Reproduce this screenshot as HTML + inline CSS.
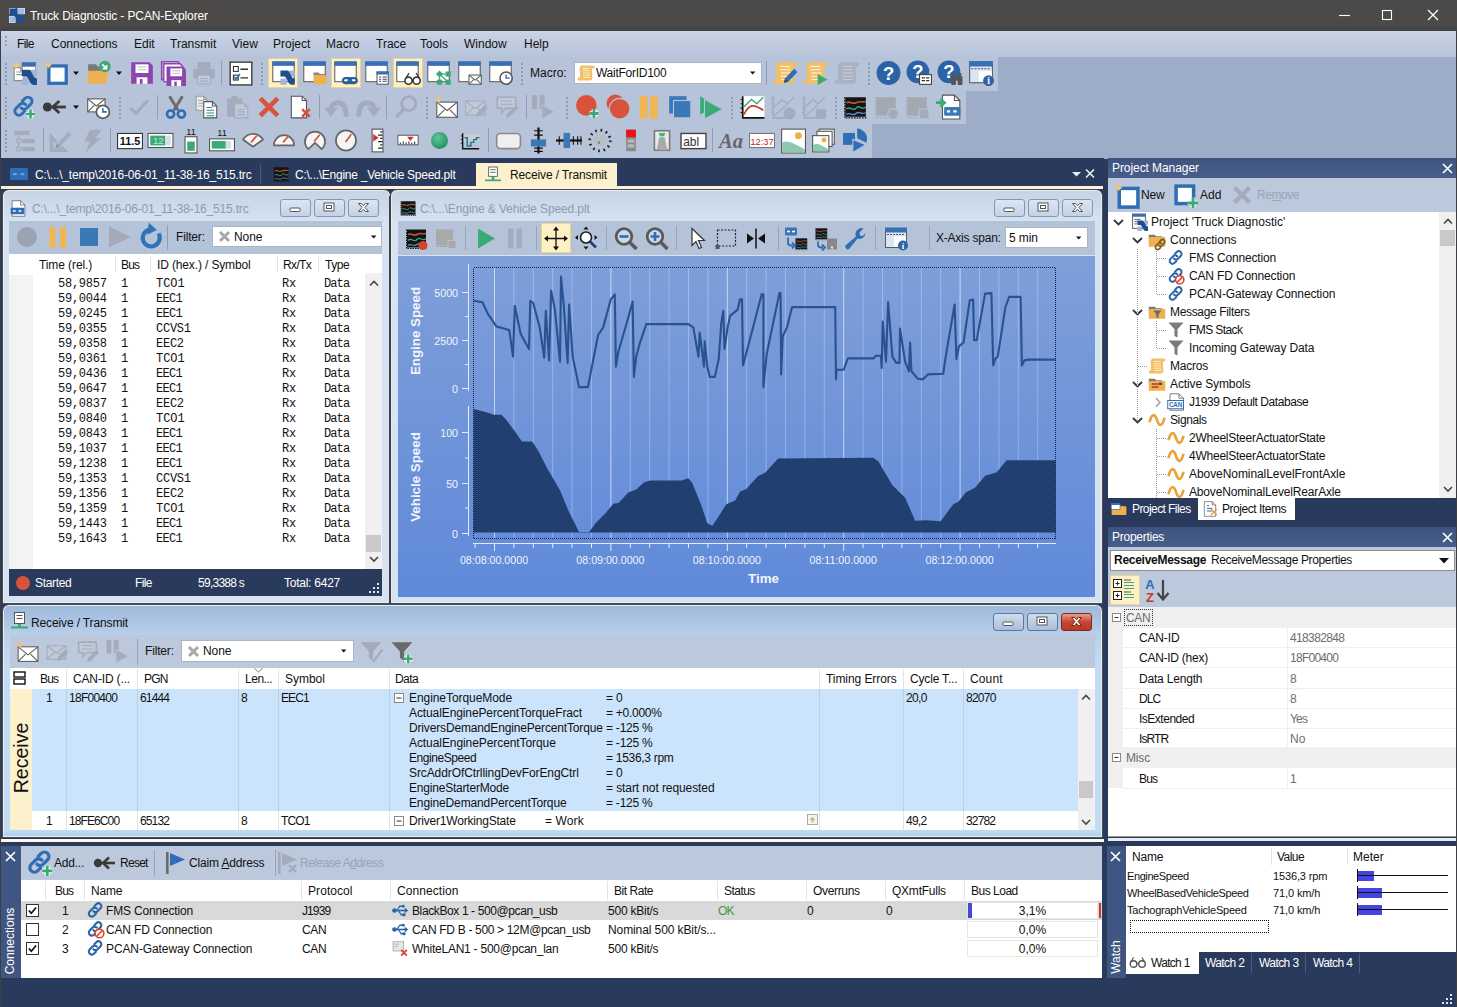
<!DOCTYPE html><html><head><meta charset="utf-8"><title>Truck Diagnostic - PCAN-Explorer</title><style>
*{box-sizing:border-box;margin:0;padding:0}
html,body{width:1457px;height:1007px;overflow:hidden;background:#2a3a5c}
body{font-family:"Liberation Sans",sans-serif;font-size:12px;color:#111;position:relative}
.a{position:absolute}
.t{position:absolute;white-space:pre;line-height:14px;height:14px}
.w{color:#fff}
.g{color:#8a93a3}
svg{position:absolute;overflow:visible}
.mono{font-family:"Liberation Mono",monospace;font-size:12px;letter-spacing:-0.25px}
</style></head><body>
<div class="a" style="left:0px;top:0px;width:1457px;height:31px;background:#4b4a48"></div>
<div class="t w" style="left:30px;top:9px;letter-spacing:-0.113px;">Truck Diagnostic - PCAN-Explorer</div>
<div class="a" style="left:0px;top:27px;width:1457px;height:4px;background:linear-gradient(#484746,#3f4246)"></div>
<svg style="left:9px;top:8px" width="16" height="15" viewBox="0 0 17 17" preserveAspectRatio="none"><rect x="0" y="0" width="7" height="7" fill="#7aa0d8"/><rect x="9" y="0" width="8" height="7" fill="#c9d9f0"/><rect x="0" y="9" width="7" height="8" fill="#c9d9f0"/><path d="M1 1h6c4 0 3 9 9 9v7h-5c-5 0-3-9-8-9H1z" fill="#1f4e8c"/><rect x="9" y="1" width="7" height="6" fill="#9dbce8"/><rect x="1" y="10" width="6" height="6" fill="#9dbce8"/></svg>
<svg style="left:1330px;top:0" width="127" height="31" stroke="#fff" fill="none" stroke-width="1.100"><path d="M9 15.500h11"/><rect x="52.500" y="10.500" width="9" height="9"/><path d="M98 10l10 10m0-10l-10 10" stroke-width="1.300"/></svg>
<div class="a" style="left:0px;top:31px;width:1457px;height:26px;background:linear-gradient(#cad4e5,#b7c4da)"></div>
<div class="t " style="left:17px;top:37px;letter-spacing:-0.636px;">File</div>
<div class="t " style="left:51px;top:37px;letter-spacing:-0.011px;">Connections</div>
<div class="t " style="left:134px;top:37px;">Edit</div>
<div class="t " style="left:170px;top:37px;">Transmit</div>
<div class="t " style="left:232px;top:37px;">View</div>
<div class="t " style="left:273px;top:37px;">Project</div>
<div class="t " style="left:326px;top:37px;">Macro</div>
<div class="t " style="left:376px;top:37px;">Trace</div>
<div class="t " style="left:420px;top:37px;">Tools</div>
<div class="t " style="left:464px;top:37px;">Window</div>
<div class="t " style="left:524px;top:37px;">Help</div>
<div class="a" style="left:0px;top:57px;width:1457px;height:102px;background:#9eadc7"></div>
<div class="a" style="left:1px;top:57px;width:997px;height:34px;background:#b6c3d9"></div>
<div class="a" style="left:1px;top:91px;width:965px;height:33px;background:#b6c3d9"></div>
<div class="a" style="left:1px;top:124px;width:871px;height:34px;background:#b6c3d9"></div>
<svg style="left:0;top:0" width="1457" height="160"><defs><radialGradient id="ballg" cx="0.4" cy="0.35" r="0.7"><stop offset="0" stop-color="#5fc79a"/><stop offset="1" stop-color="#1f8f5f"/></radialGradient></defs><rect x="5" y="63" width="2" height="2" fill="#8e9db6"/><rect x="5" y="67" width="2" height="2" fill="#8e9db6"/><rect x="5" y="71" width="2" height="2" fill="#8e9db6"/><rect x="5" y="75" width="2" height="2" fill="#8e9db6"/><rect x="5" y="79" width="2" height="2" fill="#8e9db6"/><rect x="5" y="83" width="2" height="2" fill="#8e9db6"/><g transform="translate(12.0 60.0) scale(1.0833333333333333)"><path d="M2 7h6l3 3v9h-9z" fill="#fff" stroke="#8a8a8a" stroke-width="1"/><path d="M8 7v3h3" fill="none" stroke="#8a8a8a" stroke-width="1"/><path d="M4 11h5M4 13.500h5" stroke="#999" stroke-width="1"/><rect x="9" y="2" width="13" height="4" fill="#3b6fb5"/><rect x="9.500" y="6" width="12" height="4" fill="#fff" stroke="#777" stroke-width="0.600"/><g transform="translate(9 9) scale(1.0)"><rect x="8" y="0" width="6" height="6" fill="#9db7dc"/><rect x="0" y="8" width="6" height="6" fill="#9db7dc"/><path d="M0 0h6.500c3 0 3.500 8 7.500 8v6h-3c-4 0-4.500-8-7.500-8H0z" fill="#1f4e8c"/></g><path d="M4 1.4l1.08 2.52 2.52 1.08-2.52 1.08-1.08 2.52-1.08-2.52-2.52-1.08 2.52-1.08z" fill="#f3c27a"/><circle cx="4" cy="5" r="2.232" fill="#f3c27a"/></g><g transform="translate(44.0 60.0) scale(1.0833333333333333)"><rect x="4.500" y="5.500" width="16" height="16" fill="#fff" stroke="#2f6db5" stroke-width="3"/><path d="M4 0.8999999999999999l1.08 2.52 2.52 1.08-2.52 1.08-1.08 2.52-1.08-2.52-2.52-1.08 2.52-1.08z" fill="#f3c27a"/><circle cx="4" cy="4.5" r="2.232" fill="#f3c27a"/></g><g transform="translate(86.0 60.0) scale(1.0833333333333333)"><path d="M2 4h7l2 2h5v6H2z" fill="#7a7a7a"/><path d="M2 10h19l-2.500 12H2z" fill="#f0b050"/><circle cx="17.500" cy="6" r="5.300" fill="#3aaa78"/><path d="M15 4l4 4m0-3.500v3.500h-3.500" stroke="#fff" stroke-width="1.500" fill="none"/></g><g transform="translate(129.0 60.0) scale(1.0833333333333333)"><g transform="translate(2 2) scale(1.0)"><path d="M0 0h17l3 3v17H0z" fill="#8e44ad"/><rect x="4" y="2" width="12" height="8" fill="#fff"/><path d="M6 4.500h8M6 7h8" stroke="#bbb" stroke-width="1"/><rect x="5" y="14" width="10" height="6" fill="#fff"/><rect x="8" y="15.500" width="2.500" height="4.500" fill="#8e44ad"/></g></g><g transform="translate(160.0 60.0) scale(1.0833333333333333)"><path d="M1.500 1.500h15l2.500 2.500v14h-17.500z" fill="none" stroke="#8e44ad" stroke-width="1.300"/><path d="M3.500 3.500h15l2.500 2.500v14h-17.500z" fill="#fff" stroke="#8e44ad" stroke-width="1.300"/><g transform="translate(6 6) scale(0.9)"><path d="M0 0h17l3 3v17H0z" fill="#8e44ad"/><rect x="4" y="2" width="12" height="8" fill="#fff"/><path d="M6 4.500h8M6 7h8" stroke="#bbb" stroke-width="1"/><rect x="5" y="14" width="10" height="6" fill="#fff"/><rect x="8" y="15.500" width="2.500" height="4.500" fill="#8e44ad"/></g></g><g transform="translate(191.0 60.0) scale(1.0833333333333333)"><rect x="6" y="2" width="12" height="6" fill="#a3acbd"/><rect x="2" y="8" width="20" height="9" rx="1.500" fill="#a3acbd"/><rect x="6" y="14" width="12" height="8" fill="#c3cad7" stroke="#a3acbd" stroke-width="1"/><path d="M8 17h8M8 19.500h8" stroke="#a3acbd" stroke-width="1"/></g><g transform="translate(228.0 60.0) scale(1.0833333333333333)"><rect x="2" y="2" width="20" height="21" fill="#fff" stroke="#333" stroke-width="1.200"/><rect x="5" y="6" width="4.500" height="4.500" fill="#fff" stroke="#333" stroke-width="1"/><rect x="5" y="14" width="4.500" height="4.500" fill="#fff" stroke="#333" stroke-width="1"/><path d="M11.500 8.500h7M11.500 16.500h7" stroke="#333" stroke-width="1.300"/><path d="M5.500 15.500l2 2 3.500-4.500" stroke="#2f6db5" stroke-width="1.600" fill="none"/></g><path d="M73 71.5h6l-3 3.500z" fill="#111"/><path d="M116 71.5h6l-3 3.500z" fill="#111"/><rect x="221" y="61" width="1" height="24" fill="#8f9db4"/><rect x="261" y="63" width="2" height="2" fill="#8e9db6"/><rect x="261" y="67" width="2" height="2" fill="#8e9db6"/><rect x="261" y="71" width="2" height="2" fill="#8e9db6"/><rect x="261" y="75" width="2" height="2" fill="#8e9db6"/><rect x="261" y="79" width="2" height="2" fill="#8e9db6"/><rect x="261" y="83" width="2" height="2" fill="#8e9db6"/><rect x="268.5" y="58.500" width="29" height="29" fill="#fdf0c4" stroke="#ecd28f" stroke-width="1"/><rect x="331.5" y="58.500" width="29" height="29" fill="#fdf0c4" stroke="#ecd28f" stroke-width="1"/><rect x="393.5" y="58.500" width="29" height="29" fill="#fdf0c4" stroke="#ecd28f" stroke-width="1"/><g transform="translate(271.25 60.25) scale(1.0208333333333333)"><rect x="1.500" y="2" width="21" height="19" fill="#fff" stroke="#5a5a5a" stroke-width="1"/><rect x="1" y="1" width="22" height="4.500" fill="#3b6fb5"/><g transform="translate(9 10) scale(1.0)"><rect x="8" y="0" width="6" height="6" fill="#9db7dc"/><rect x="0" y="8" width="6" height="6" fill="#9db7dc"/><path d="M0 0h6.500c3 0 3.500 8 7.500 8v6h-3c-4 0-4.500-8-7.500-8H0z" fill="#1f4e8c"/></g></g><g transform="translate(302.25 60.25) scale(1.0208333333333333)"><rect x="1.500" y="2" width="21" height="19" fill="#fff" stroke="#5a5a5a" stroke-width="1"/><rect x="1" y="1" width="22" height="4.500" fill="#3b6fb5"/><path d="M11 12h5l1.500 1.500h6v1.500H11z" fill="#8a8a8a"/><rect x="11" y="14.500" width="13" height="9" fill="#f0b050"/></g><g transform="translate(333.25 60.25) scale(1.0208333333333333)"><rect x="1.500" y="2" width="21" height="19" fill="#fff" stroke="#5a5a5a" stroke-width="1"/><rect x="1" y="1" width="22" height="4.500" fill="#3b6fb5"/><g transform="translate(8.5 16.5) scale(1.0)" fill="none" stroke="#2a5f9e" stroke-width="2.200"><rect x="1" y="1" width="8" height="5" rx="2.500"/><rect x="6.500" y="1" width="8" height="5" rx="2.500"/></g></g><g transform="translate(364.25 60.25) scale(1.0208333333333333)"><rect x="1.500" y="2" width="21" height="19" fill="#fff" stroke="#5a5a5a" stroke-width="1"/><rect x="1" y="1" width="22" height="4.500" fill="#3b6fb5"/><rect x="12.500" y="11.500" width="11" height="12" fill="#fff" stroke="#555" stroke-width="1"/><rect x="12" y="11" width="12" height="3" fill="#3b6fb5"/><path d="M14.500 16.500h2M18 16.500h4M14.500 18.500h2M18 18.500h4M14.500 20.500h2M18 20.500h4" stroke="#445" stroke-width="1"/></g><g transform="translate(395.25 60.25) scale(1.0208333333333333)"><rect x="1.500" y="2" width="21" height="19" fill="#fff" stroke="#5a5a5a" stroke-width="1"/><rect x="1" y="1" width="22" height="4.500" fill="#3b6fb5"/><circle cx="13" cy="20" r="3.500" fill="#fff" stroke="#3a3a3a" stroke-width="1.600"/><circle cx="21" cy="20" r="3.500" fill="#fff" stroke="#3a3a3a" stroke-width="1.600"/><path d="M10.500 17.500l3-5M23.500 17.500l-3-5M16.500 19.500h1" stroke="#3a3a3a" stroke-width="1.300" fill="none"/></g><g transform="translate(426.25 60.25) scale(1.0208333333333333)"><rect x="1.500" y="2" width="21" height="19" fill="#fff" stroke="#5a5a5a" stroke-width="1"/><rect x="1" y="1" width="22" height="4.500" fill="#3b6fb5"/><g fill="#3aaa78"><path d="M13 10l3.500 3.500-3.500 3.500-3.500-3.500z"/><rect x="19" y="11" width="5" height="5"/><rect x="10.500" y="19" width="5" height="5"/><rect x="19" y="19" width="5" height="5"/></g><path d="M13 13.500h8.500M13 13.500v8M13 13.500l8.500 8" stroke="#3aaa78" stroke-width="1.200"/></g><g transform="translate(457.25 60.25) scale(1.0208333333333333)"><rect x="1.500" y="2" width="21" height="19" fill="#fff" stroke="#5a5a5a" stroke-width="1"/><rect x="1" y="1" width="22" height="4.500" fill="#3b6fb5"/><rect x="11.5" y="14.5" width="12" height="9" fill="#fff" stroke="#5a5a5a" stroke-width="1"/><path d="M11.5 14.5l6.0 4.95 6.0-4.95M11.5 23.5l4.5600000000000005-4.5M23.5 23.5l-4.5600000000000005-4.5" fill="none" stroke="#5a5a5a" stroke-width="1"/></g><g transform="translate(488.25 60.25) scale(1.0208333333333333)"><rect x="1.500" y="2" width="21" height="19" fill="#fff" stroke="#5a5a5a" stroke-width="1"/><rect x="1" y="1" width="22" height="4.500" fill="#3b6fb5"/><circle cx="17.5" cy="17.5" r="6" fill="#fff" stroke="#5a5a5a" stroke-width="1.600"/><path d="M17.5 13.9V17.5h3.5999999999999996" fill="none" stroke="#2f6db5" stroke-width="1.400"/></g><rect x="521" y="63" width="2" height="2" fill="#8e9db6"/><rect x="521" y="67" width="2" height="2" fill="#8e9db6"/><rect x="521" y="71" width="2" height="2" fill="#8e9db6"/><rect x="521" y="75" width="2" height="2" fill="#8e9db6"/><rect x="521" y="79" width="2" height="2" fill="#8e9db6"/><rect x="521" y="83" width="2" height="2" fill="#8e9db6"/><rect x="868" y="63" width="2" height="2" fill="#8e9db6"/><rect x="868" y="67" width="2" height="2" fill="#8e9db6"/><rect x="868" y="71" width="2" height="2" fill="#8e9db6"/><rect x="868" y="75" width="2" height="2" fill="#8e9db6"/><rect x="868" y="79" width="2" height="2" fill="#8e9db6"/><rect x="868" y="83" width="2" height="2" fill="#8e9db6"/><rect x="766" y="61" width="1" height="24" fill="#8f9db4"/><g transform="translate(772.0 60.0) scale(1.0833333333333333)"><path d="M7 2h14.500c1.500 0 2 1.200 1.500 2.500-0.500 1.400-1.700 1.700-3.200 1.700l0.700 11.300c0 2.500-1.200 4.500-3.500 4.500H2.500c-1.500 0-2-1.200-1.500-2.500 0.500-1.400 1.700-1.700 3.200-1.700L3.500 6.500C3.300 4 4.800 2 7 2z" fill="#f2c067"/><path d="M7.500 6h9M7.500 9h9.500M8 12h9.500M8 15h9.500M8.500 18h9" stroke="#fff6e0" stroke-width="1.100"/><path d="M11 21l1-4 8.500-9 3 3-8.500 9z" fill="#2f6db5"/><path d="M11 21l1-4 3 3z" fill="#1f4e8c"/></g><g transform="translate(802.5 60.0) scale(1.0833333333333333)"><path d="M7 2h14.500c1.500 0 2 1.200 1.500 2.500-0.500 1.400-1.700 1.700-3.200 1.700l0.700 11.300c0 2.500-1.200 4.500-3.500 4.500H2.500c-1.500 0-2-1.200-1.500-2.500 0.500-1.400 1.700-1.700 3.200-1.700L3.500 6.500C3.300 4 4.800 2 7 2z" fill="#f2c067"/><path d="M7.500 6h9M7.500 9h9.500M8 12h9.500M8 15h9.500M8.500 18h9" stroke="#fff6e0" stroke-width="1.100"/><path d="M14 13v10l9-5z" fill="#3aaa78"/></g><g transform="translate(834.0 60.0) scale(1.0833333333333333)"><path d="M7 2h14.500c1.500 0 2 1.200 1.500 2.500-0.500 1.400-1.700 1.700-3.200 1.700l0.700 11.300c0 2.500-1.200 4.500-3.500 4.500H2.500c-1.500 0-2-1.200-1.500-2.500 0.500-1.400 1.700-1.700 3.200-1.700L3.500 6.500C3.300 4 4.800 2 7 2z" fill="#aab2c2"/><path d="M7.500 6h9M7.500 9h9.500M8 12h9.500M8 15h9.500M8.500 18h9" stroke="#c9d0dc" stroke-width="1.100"/></g><g transform="translate(875.5 60.0) scale(1.0833333333333333)"><circle cx="12" cy="12" r="11" fill="#2c63a7"/><text x="12" y="18" text-anchor="middle" font-size="17" font-weight="bold" fill="#fff" font-family="Liberation Sans, sans-serif">?</text></g><g transform="translate(906.0 60.0) scale(1.0833333333333333)"><circle cx="11" cy="11" r="10.5" fill="#2c63a7"/><text x="11" y="17" text-anchor="middle" font-size="17" font-weight="bold" fill="#fff" font-family="Liberation Sans, sans-serif">?</text><rect x="12.500" y="13.500" width="11" height="9" fill="#fff" stroke="#444" stroke-width="1"/><path d="M14.500 16.500h3M18.500 16.500h3M14.500 19h3M18.500 19h3" stroke="#333" stroke-width="1.300"/></g><g transform="translate(937.0 60.0) scale(1.0833333333333333)"><circle cx="11" cy="11" r="10.5" fill="#2c63a7"/><text x="11" y="17" text-anchor="middle" font-size="17" font-weight="bold" fill="#fff" font-family="Liberation Sans, sans-serif">?</text><g fill="#555"><rect x="13" y="15" width="4.500" height="8" rx="1"/><rect x="19" y="15" width="4.500" height="8" rx="1"/><rect x="14" y="12" width="2.500" height="4"/><rect x="20" y="12" width="2.500" height="4"/><rect x="17" y="16" width="2.500" height="3"/></g></g><g transform="translate(968.0 60.0) scale(1.0833333333333333)"><rect x="1.500" y="2" width="21" height="19" fill="#dbe6f5" stroke="#5a5a5a" stroke-width="1"/><rect x="1" y="1" width="22" height="5" fill="#3b6fb5"/><path d="M3 8h18" stroke="#555" stroke-width="1" stroke-dasharray="2 1"/><rect x="10" y="10" width="12" height="10" fill="#fff"/><circle cx="19" cy="19" r="5" fill="#2c63a7"/><text x="19" y="22.500" text-anchor="middle" font-size="9" font-weight="bold" fill="#fff" font-family="Liberation Serif, serif">i</text></g><rect x="5" y="97" width="2" height="2" fill="#8e9db6"/><rect x="5" y="101" width="2" height="2" fill="#8e9db6"/><rect x="5" y="105" width="2" height="2" fill="#8e9db6"/><rect x="5" y="109" width="2" height="2" fill="#8e9db6"/><rect x="5" y="113" width="2" height="2" fill="#8e9db6"/><rect x="5" y="117" width="2" height="2" fill="#8e9db6"/><rect x="119" y="97" width="2" height="2" fill="#8e9db6"/><rect x="119" y="101" width="2" height="2" fill="#8e9db6"/><rect x="119" y="105" width="2" height="2" fill="#8e9db6"/><rect x="119" y="109" width="2" height="2" fill="#8e9db6"/><rect x="119" y="113" width="2" height="2" fill="#8e9db6"/><rect x="119" y="117" width="2" height="2" fill="#8e9db6"/><rect x="426" y="97" width="2" height="2" fill="#8e9db6"/><rect x="426" y="101" width="2" height="2" fill="#8e9db6"/><rect x="426" y="105" width="2" height="2" fill="#8e9db6"/><rect x="426" y="109" width="2" height="2" fill="#8e9db6"/><rect x="426" y="113" width="2" height="2" fill="#8e9db6"/><rect x="426" y="117" width="2" height="2" fill="#8e9db6"/><rect x="566" y="97" width="2" height="2" fill="#8e9db6"/><rect x="566" y="101" width="2" height="2" fill="#8e9db6"/><rect x="566" y="105" width="2" height="2" fill="#8e9db6"/><rect x="566" y="109" width="2" height="2" fill="#8e9db6"/><rect x="566" y="113" width="2" height="2" fill="#8e9db6"/><rect x="566" y="117" width="2" height="2" fill="#8e9db6"/><rect x="731" y="97" width="2" height="2" fill="#8e9db6"/><rect x="731" y="101" width="2" height="2" fill="#8e9db6"/><rect x="731" y="105" width="2" height="2" fill="#8e9db6"/><rect x="731" y="109" width="2" height="2" fill="#8e9db6"/><rect x="731" y="113" width="2" height="2" fill="#8e9db6"/><rect x="731" y="117" width="2" height="2" fill="#8e9db6"/><rect x="835" y="97" width="2" height="2" fill="#8e9db6"/><rect x="835" y="101" width="2" height="2" fill="#8e9db6"/><rect x="835" y="105" width="2" height="2" fill="#8e9db6"/><rect x="835" y="109" width="2" height="2" fill="#8e9db6"/><rect x="835" y="113" width="2" height="2" fill="#8e9db6"/><rect x="835" y="117" width="2" height="2" fill="#8e9db6"/><g transform="translate(11.0 94.0) scale(1.0833333333333333)"><g fill="none" stroke="#2f6db5" stroke-width="2.700" stroke-linecap="round"><path d="M10.500 6.500l2.500-2.500a3.700 3.700 0 0 1 5.300 5.300l-3.600 3.600a3.700 3.700 0 0 1-5.300 0"/><path d="M12.500 16l-2.500 2.500a3.700 3.700 0 0 1-5.300-5.300l3.600-3.600a3.700 3.700 0 0 1 5.300 0"/></g><path d="M13.8 18.5h8.4M18 14.3v8.4" stroke="#fff" stroke-width="4.0"/><path d="M13.8 18.5h8.4M18 14.3v8.4" stroke="#3aaa78" stroke-width="2.4"/></g><g transform="translate(42.0 94.0) scale(1.0833333333333333)"><circle cx="5" cy="12" r="4.200" fill="#3a3a3a"/><path d="M10 12h12" stroke="#3a3a3a" stroke-width="2.600"/><path d="M16 6.500l-6 5.500 6 5.500" stroke="#3a3a3a" stroke-width="2.600" fill="none"/></g><g transform="translate(85.0 94.0) scale(1.0833333333333333)"><rect x="2.5" y="4.5" width="16" height="12" fill="#fff" stroke="#5a5a5a" stroke-width="1"/><path d="M2.5 4.5l8.0 6.6000000000000005 8.0-6.6000000000000005M2.5 16.5l6.08-6.0M18.5 16.5l-6.08-6.0" fill="none" stroke="#5a5a5a" stroke-width="1"/><circle cx="16.5" cy="16.5" r="6" fill="#fff" stroke="#5a5a5a" stroke-width="1.600"/><path d="M16.5 12.9V16.5h3.5999999999999996" fill="none" stroke="#2f6db5" stroke-width="1.400"/></g><g transform="translate(126.0 94.0) scale(1.0833333333333333)"><path d="M4 13l5 5 11-12" stroke="#a3acbd" stroke-width="3" fill="none"/></g><g transform="translate(163.0 94.0) scale(1.0833333333333333)"><path d="M6 2l8 13M18 2l-8 13" stroke="#6a6a6a" stroke-width="2.600"/><circle cx="7" cy="18.500" r="3.300" fill="none" stroke="#2f6db5" stroke-width="2.400"/><circle cx="17" cy="18.500" r="3.300" fill="none" stroke="#2f6db5" stroke-width="2.400"/></g><g transform="translate(194.0 94.0) scale(1.0833333333333333)"><path d="M2 2h7l3 3v10h-10z" fill="#e9edf3" stroke="#9a9a9a" stroke-width="1"/><path d="M9 2v3h3" fill="none" stroke="#9a9a9a" stroke-width="1"/><path d="M4 6h5M4 8.500h6M4 11h6" stroke="#aaa" stroke-width="1"/><path d="M9 7h8l4 4v11h-12z" fill="#fff" stroke="#555" stroke-width="1"/><path d="M17 7v4h4" fill="none" stroke="#555" stroke-width="1"/><path d="M11.500 12.500h5M11.500 15h7M11.500 17.500h7M11.500 20h7" stroke="#2a8a8a" stroke-width="1"/></g><g transform="translate(225.0 94.0) scale(1.0833333333333333)"><rect x="2" y="4" width="14" height="17" fill="#a3acbd"/><rect x="6" y="2" width="6" height="4" fill="#a3acbd"/><path d="M9 9h9l3 3v10h-12z" fill="#c3cad7" stroke="#a3acbd" stroke-width="1"/><path d="M18 9v3h3" fill="none" stroke="#a3acbd" stroke-width="1"/><path d="M11.500 14h6M11.500 16.500h7M11.500 19h7" stroke="#a3acbd" stroke-width="1"/></g><g transform="translate(256.0 94.0) scale(1.0833333333333333)"><path d="M4 4l16 16M20 4l-16 16" stroke="#d9533c" stroke-width="4.200"/></g><g transform="translate(287.0 94.0) scale(1.0833333333333333)"><path d="M4 2h10l4 4v16h-14z" fill="#fff" stroke="#555" stroke-width="1"/><path d="M14 2v4h4" fill="none" stroke="#555" stroke-width="1"/><path d="M14 14l7 7m0-7l-7 7" stroke="#d9533c" stroke-width="2.400"/></g><g transform="translate(324.0 94.0) scale(1.0833333333333333)"><path d="M20.500 21c0-9-2.500-13-7.500-13s-6.500 3-6.500 7" stroke="#a3acbd" stroke-width="4.600" fill="none"/><path d="M0 12.500h13l-6.500 8.500z" fill="#a3acbd"/></g><g transform="translate(355.0 94.0) scale(1.0833333333333333)"><g transform="translate(24 0) scale(-1 1)"><path d="M20.500 21c0-9-2.500-13-7.500-13s-6.500 3-6.500 7" stroke="#a3acbd" stroke-width="4.600" fill="none"/><path d="M0 12.500h13l-6.500 8.500z" fill="#a3acbd"/></g></g><g transform="translate(393.0 94.0) scale(1.0833333333333333)"><circle cx="14.500" cy="9" r="6.500" fill="none" stroke="#a3acbd" stroke-width="2.600"/><path d="M10 14l-7 7.500" stroke="#a3acbd" stroke-width="3.200"/></g><g transform="translate(433.0 94.0) scale(1.0833333333333333)"><rect x="3.5" y="7.5" width="19" height="14" fill="#fff" stroke="#5a5a5a" stroke-width="1"/><path d="M3.5 7.5l9.5 7.700000000000001 9.5-7.700000000000001M3.5 21.5l7.22-7.0M22.5 21.5l-7.22-7.0" fill="none" stroke="#5a5a5a" stroke-width="1"/><path d="M5 2.1l1.02 2.38 2.38 1.02-2.38 1.02-1.02 2.38-1.02-2.38-2.38-1.02 2.38-1.02z" fill="#f3c27a"/><circle cx="5" cy="5.5" r="2.108" fill="#f3c27a"/></g><g transform="translate(463.0 94.0) scale(1.0833333333333333)"><rect x="2.5" y="6.5" width="18" height="13" fill="#c3cad7" stroke="#a3acbd" stroke-width="1"/><path d="M2.5 6.5l9.0 7.15 9.0-7.15M2.5 19.5l6.84-6.5M20.5 19.5l-6.84-6.5" fill="none" stroke="#a3acbd" stroke-width="1"/><path d="M12 21l1-4 7-7 3 3-7 7z" fill="#a3acbd"/></g><g transform="translate(494.0 94.0) scale(1.0833333333333333)"><path d="M3 3h17v10h-9l-4 4v-4H3z" fill="#c3cad7" stroke="#a3acbd" stroke-width="1.500"/><path d="M6 6.500h11M6 9.500h11" stroke="#a3acbd" stroke-width="1"/><path d="M11 22l1-3.500 8-8 2.500 2.500-8 8z" fill="#a3acbd"/></g><g transform="translate(530.0 94.0) scale(1.0833333333333333)"><rect x="2" y="1" width="4.500" height="13" fill="#a3acbd"/><rect x="9" y="1" width="4.500" height="13" fill="#a3acbd"/><path d="M11 10v13l12-6.500z" fill="#a3acbd" stroke="#b6c3d9" stroke-width="1"/></g><g transform="translate(575.0 94.0) scale(1.0833333333333333)"><circle cx="10.500" cy="10.500" r="9.500" fill="#d9533c"/><path d="M13.3 18h8.4M17.5 13.8v8.4" stroke="#fff" stroke-width="4.2"/><path d="M13.3 18h8.4M17.5 13.8v8.4" stroke="#3aaa78" stroke-width="2.6"/></g><g transform="translate(605.0 94.0) scale(1.0833333333333333)"><circle cx="9.500" cy="8.500" r="8" fill="#d9533c"/><circle cx="13.500" cy="13.500" r="9.500" fill="#d9533c" stroke="#b6c3d9" stroke-width="1"/></g><g transform="translate(636.0 94.0) scale(1.0833333333333333)"><rect x="3.500" y="2" width="7" height="21" rx="1" fill="#f0b652"/><rect x="13" y="2" width="7" height="21" rx="1" fill="#f0b652"/></g><g transform="translate(667.0 94.0) scale(1.0833333333333333)"><rect x="2" y="2" width="16" height="16" fill="#3b78b8"/><rect x="6" y="6" width="16" height="16" fill="#3b78b8" stroke="#b6c3d9" stroke-width="1"/></g><g transform="translate(698.0 94.0) scale(1.0833333333333333)"><path d="M2 2v17l15-8.500z" fill="#3aaa78"/><path d="M6 5v18l17-9z" fill="#3aaa78" stroke="#b6c3d9" stroke-width="1"/></g><g transform="translate(739.5 94.0) scale(1.0833333333333333)"><rect x="3" y="2" width="20" height="20" fill="#fff"/><path d="M3 2v20h20" stroke="#111" stroke-width="1.500" fill="none"/><path d="M1 5h2M1 9h2M1 13h2M1 17h2" stroke="#111" stroke-width="1"/><path d="M4 12l7-7 5 4 6-6" stroke="#3aaa78" stroke-width="1.300" fill="none"/><path d="M4 19c5-10 9-10 18-4" stroke="#c0392b" stroke-width="1.500" fill="none"/></g><g transform="translate(770.0 94.0) scale(1.0833333333333333)"><path d="M3 2v20h18" stroke="#a3acbd" stroke-width="1.500" fill="none"/><path d="M1 5h2M1 9h2M1 13h2M1 17h2" stroke="#a3acbd" stroke-width="1"/><path d="M4 12l7-7 5 4 6-6M4 20l12-10" stroke="#a3acbd" stroke-width="1.200" fill="none"/><circle cx="18" cy="18" r="5.500" fill="#a3acbd"/></g><g transform="translate(801.0 94.0) scale(1.0833333333333333)"><path d="M3 2v20h18" stroke="#a3acbd" stroke-width="1.500" fill="none"/><path d="M1 5h2M1 9h2M1 13h2M1 17h2" stroke="#a3acbd" stroke-width="1"/><path d="M4 12l7-7 5 4 6-6M4 20l12-10" stroke="#a3acbd" stroke-width="1.200" fill="none"/><rect x="14" y="14" width="9" height="9" fill="#a3acbd"/></g><g transform="translate(842.0 94.0) scale(1.0833333333333333)"><rect x="3" y="3" width="19" height="18" fill="#141414"/><path d="M2.500 3v19h20" stroke="#111" stroke-width="1" stroke-dasharray="1.500 1" fill="none"/><path d="M4 8c4-2 5 2 9 0s5 0 9-1" stroke="#c0563b" stroke-width="1.500" fill="none"/><path d="M4 14c3-4 6 3 9-1s5 3 9-1" stroke="#3aaa78" stroke-width="1.300" fill="none"/><path d="M4 19c3-3 6 2 9-1s5 2 9-1" stroke="#5a8fd0" stroke-width="1.200" fill="none"/></g><g transform="translate(873.0 94.0) scale(1.0833333333333333)"><rect x="3" y="3" width="18" height="17" fill="#a4a8b0"/><path d="M2.500 3v19h18" stroke="#a3acbd" stroke-width="1" stroke-dasharray="1.500 1" fill="none"/><circle cx="18.500" cy="18.500" r="5" fill="#a3acbd" stroke="#b6c3d9" stroke-width="1"/></g><g transform="translate(904.0 94.0) scale(1.0833333333333333)"><rect x="3" y="3" width="18" height="17" fill="#a4a8b0"/><path d="M2.500 3v19h18" stroke="#a3acbd" stroke-width="1" stroke-dasharray="1.500 1" fill="none"/><rect x="14" y="14" width="9" height="9" fill="#a3acbd" stroke="#b6c3d9" stroke-width="1"/></g><g transform="translate(936.0 94.0) scale(1.0833333333333333)"><path d="M6 1h11l5 5v17h-16z" fill="#fff" stroke="#555" stroke-width="1"/><path d="M17 1v5h5" fill="none" stroke="#555" stroke-width="1"/><rect x="7.500" y="12" width="15" height="8" rx="1" fill="#3b78b8"/><path d="M10 16h3M16 16h3" stroke="#fff" stroke-width="2"/><path d="M0 8h6M4 4.500l4 3.500-4 3.500" stroke="#3aaa78" stroke-width="2.400" fill="none"/></g><path d="M73 105.5h6l-3 3.500z" fill="#111"/><rect x="157" y="95" width="1" height="24" fill="#8f9db4"/><rect x="319" y="95" width="1" height="24" fill="#8f9db4"/><rect x="386" y="95" width="1" height="24" fill="#8f9db4"/><rect x="526" y="95" width="1" height="24" fill="#8f9db4"/><rect x="5" y="130" width="2" height="2" fill="#8e9db6"/><rect x="5" y="134" width="2" height="2" fill="#8e9db6"/><rect x="5" y="138" width="2" height="2" fill="#8e9db6"/><rect x="5" y="142" width="2" height="2" fill="#8e9db6"/><rect x="5" y="146" width="2" height="2" fill="#8e9db6"/><rect x="5" y="150" width="2" height="2" fill="#8e9db6"/><rect x="43" y="128" width="1" height="24" fill="#8f9db4"/><rect x="110" y="128" width="1" height="24" fill="#8f9db4"/><rect x="488" y="128" width="1" height="24" fill="#8f9db4"/><rect x="712" y="128" width="1" height="24" fill="#8f9db4"/><g transform="translate(11.0 127.5) scale(1.0833333333333333)"><rect x="3" y="3" width="14" height="4" fill="#a3acbd"/><rect x="11" y="10.500" width="11" height="4" fill="#a3acbd"/><rect x="11" y="18" width="11" height="4" fill="#a3acbd"/><rect x="5.500" y="10.500" width="3.500" height="3.500" fill="none" stroke="#a3acbd"/><rect x="5.500" y="18" width="3.500" height="3.500" fill="none" stroke="#a3acbd"/><path d="M7 7v3M7 14.500v3M9 12.500h2M9 20h2" stroke="#a3acbd"/></g><g transform="translate(48.0 127.5) scale(1.0833333333333333)"><path d="M1.500 22.500V5l17.500 17.500zM5 19h6.500L5 12.500z" fill="#a3acbd" fill-rule="evenodd"/><path d="M6.500 19.500l1.500-5L19 3l3.500 3.500L11.500 18z" fill="#a3acbd" stroke="#b6c3d9" stroke-width="1.200"/><path d="M6.500 19.500l1.500-5 3.500 3.500z" fill="#8f98aa"/></g><g transform="translate(79.0 127.5) scale(1.0833333333333333)"><path d="M10 2h11l-6 8h5L6 23l4-10H5z" fill="#a3acbd"/></g><g transform="translate(117.0 127.5) scale(1.0833333333333333)"><rect x="0.500" y="5.500" width="23" height="14" fill="#fff" stroke="#333" stroke-width="1"/><text x="12" y="16.5" text-anchor="middle" font-size="10" font-weight="bold" fill="#111" font-family="Liberation Sans, sans-serif" >11.5</text></g><g transform="translate(147.5 127.5) scale(1.0833333333333333)"><rect x="0.500" y="5.500" width="23" height="13" fill="#fff" stroke="#555" stroke-width="1"/><rect x="2.500" y="7.500" width="14" height="9" fill="#3aaa78"/><rect x="16.500" y="7.500" width="5" height="9" fill="#d6dde6"/><text x="10" y="15.5" text-anchor="middle" font-size="9" font-weight="normal" fill="#bfe5d2" font-family="Liberation Sans, sans-serif" >12</text></g><g transform="translate(178.0 127.5) scale(1.0833333333333333)"><text x="12" y="6.5" text-anchor="middle" font-size="8.5" font-weight="normal" fill="#111" font-family="Liberation Sans, sans-serif" >11</text><rect x="6.500" y="8.500" width="11" height="15" fill="#fff" stroke="#555" stroke-width="1"/><rect x="8.500" y="13" width="7" height="8.500" fill="#3aaa78"/></g><g transform="translate(209.0 127.5) scale(1.0833333333333333)"><text x="12" y="7.5" text-anchor="middle" font-size="8.5" font-weight="normal" fill="#111" font-family="Liberation Sans, sans-serif" >11</text><rect x="0.500" y="10.500" width="23" height="11" fill="#fff" stroke="#555" stroke-width="1"/><rect x="2.500" y="12.500" width="13" height="7" fill="#3aaa78"/><rect x="15.500" y="12.500" width="5" height="7" fill="#d6dde6"/></g><g transform="translate(241.5 129.0) scale(0.9583333333333334)"><path d="M1.500 11C7 3 17 3 22.500 11L12 18.500z" fill="#f5f5f5" stroke="#666" stroke-width="1.800" stroke-linejoin="round"/><path d="M10 14l6-7" stroke="#d9533c" stroke-width="1.800"/></g><g transform="translate(272.5 129.0) scale(0.9583333333333334)"><path d="M1.500 17a10.500 10.500 0 0 1 21 0z" fill="#f5f5f5" stroke="#666" stroke-width="1.800" stroke-linejoin="round"/><path d="M11 14l6-7" stroke="#d9533c" stroke-width="1.800"/></g><g transform="translate(303.5 129.0) scale(0.9583333333333334)"><path d="M5 21a10.500 10.500 0 1 1 14 0l-7-6.500z" fill="#f5f5f5" stroke="#666" stroke-width="1.800" stroke-linejoin="round"/><path d="M11 13l6-7" stroke="#d9533c" stroke-width="1.800"/></g><g transform="translate(334.5 129.0) scale(0.9583333333333334)"><circle cx="12" cy="12" r="10.500" fill="#f5f5f5" stroke="#666" stroke-width="1.800"/><path d="M11.500 13.500l6-8" stroke="#d9533c" stroke-width="1.800"/></g><g transform="translate(364.0 127.5) scale(1.0833333333333333)"><rect x="7.500" y="1.500" width="10" height="21" fill="#fff" stroke="#555" stroke-width="1"/><path d="M15 4h2M13 7h4M15 10h2M13 13h4M15 16h2M13 19h4" stroke="#222" stroke-width="1"/><path d="M8.500 6v7l5-3.500z" fill="#d0312d"/></g><g transform="translate(396.5 129.0) scale(0.9583333333333334)"><rect x="1.500" y="6.500" width="21" height="10" fill="#fff" stroke="#555" stroke-width="1"/><path d="M4 14v2M7 13v3M10 14v2M13 13v3M16 14v2M19 13v3" stroke="#222" stroke-width="1"/><path d="M11 8h7l-3.500 4.500z" fill="#d0312d"/></g><g transform="translate(427.5 128.5) scale(1.0)"><circle cx="12" cy="12" r="8.500" fill="url(#ballg)"/></g><g transform="translate(459.0 129.5) scale(0.9166666666666666)"><rect x="4" y="5" width="18" height="8" fill="#c9ccd3"/><path d="M4 4v17h18" stroke="#111" stroke-width="1.500" fill="none"/><path d="M2 7h2M2 11h2M2 15h2" stroke="#111"/><path d="M6 9h3v9h4v-4h3v-3h3v-2h3" stroke="#1f7a7a" stroke-width="1.500" fill="none"/></g><g transform="translate(495.0 127.5) scale(1.0833333333333333)"><rect x="1.500" y="5.500" width="22" height="14" rx="3.500" fill="#efefef" stroke="#8a8a8a" stroke-width="1.500"/></g><g transform="translate(525.5 127.5) scale(1.0833333333333333)"><path d="M12 0v24" stroke="#111" stroke-width="2"/><path d="M8 3h8M8 7h8M8 19h8M8 22h8" stroke="#111" stroke-width="1"/><rect x="5" y="11" width="14" height="6.500" fill="#3b78b8"/></g><g transform="translate(556.0 127.5) scale(1.0833333333333333)"><path d="M0 12h24" stroke="#111" stroke-width="2"/><path d="M3 8v8M16 8v8M20 8v8M23 8v8" stroke="#111" stroke-width="1"/><rect x="7" y="5" width="6" height="14" fill="#3b78b8"/></g><g transform="translate(587.0 127.5) scale(1.0833333333333333)"><circle cx="12" cy="12" r="9.500" fill="none" stroke="#222" stroke-width="2.500" stroke-dasharray="1.500 3.500"/><circle cx="12" cy="12" r="6" fill="#b9bec8"/><circle cx="11" cy="14" r="1.200" fill="#3aaa78"/></g><g transform="translate(618.0 127.5) scale(1.0833333333333333)"><rect x="7.500" y="2" width="9" height="20" rx="1" fill="#8a8a8a"/><rect x="7.500" y="2" width="9" height="7" fill="#e8101a"/><rect x="9" y="11" width="6" height="3" fill="#b9b9b9"/><rect x="9" y="15.500" width="6" height="3" fill="#b9b9b9"/></g><g transform="translate(649.0 127.5) scale(1.0833333333333333)"><rect x="5" y="3" width="14" height="18" fill="#e9e9e9" stroke="#7a7a7a" stroke-width="1.500"/><path d="M7 21l2.500-12h5l2.500 12z" fill="#a9a9a9"/><path d="M9 5h6l-1 3h-4z" fill="#3bbf6b"/></g><g transform="translate(680.5 127.5) scale(1.0833333333333333)"><rect x="0.500" y="5.500" width="23" height="14" fill="#fff" stroke="#444" stroke-width="1.300"/><text x="2.5" y="17" text-anchor="start" font-size="11" font-weight="normal" fill="#333" font-family="Liberation Sans, sans-serif" >abl</text></g><g transform="translate(718.0 127.5) scale(1.0833333333333333)"><text x="12" y="19" text-anchor="middle" font-size="19" font-weight="bold" fill="#666" font-family="Liberation Serif, serif" font-style="italic">Aa</text></g><g transform="translate(749.0 127.5) scale(1.0833333333333333)"><rect x="0.500" y="5.500" width="23" height="13" fill="#fff" stroke="#777" stroke-width="1"/><text x="12" y="16" text-anchor="middle" font-size="8.5" font-weight="normal" fill="#c0201c" font-family="Liberation Sans, sans-serif" >12:37</text></g><g transform="translate(780.0 127.5) scale(1.0833333333333333)"><rect x="1.500" y="1.500" width="22" height="22" fill="#fff" stroke="#555" stroke-width="1"/><circle cx="17" cy="7.500" r="3.200" fill="#f0b050"/><path d="M2 14c5-3 9 0 21 6v3H2z" fill="#8cc9b0"/></g><g transform="translate(811.0 127.5) scale(1.0833333333333333)"><rect x="7.500" y="1.500" width="14" height="14" fill="#fff" stroke="#555"/><rect x="5.500" y="3.500" width="14" height="14" fill="#fff" stroke="#555"/><rect x="1.500" y="7.500" width="15" height="15" fill="#fff" stroke="#555"/><circle cx="12" cy="11.500" r="2.300" fill="#f0b050"/><path d="M2 16c4-2 7 0 14 4v2H2z" fill="#8cc9b0"/></g><g transform="translate(842.0 127.5) scale(1.0833333333333333)"><rect x="1" y="5" width="11" height="11" fill="#2f6db5"/><path d="M14 10V1a9.500 9.500 0 0 1 8.500 13z" fill="#2f6db5"/><path d="M10 11v12l12-7z" fill="#2f6db5" stroke="#b6c3d9" stroke-width="1"/></g></svg>
<div class="t " style="left:530px;top:66px;">Macro:</div>
<div class="a" style="left:574px;top:62px;width:188px;height:22px;background:#fff;border:1px solid #aab4c4"></div>
<svg style="left:577px;top:64px" width="18" height="18" viewBox="0 0 24 24"><path d="M7 2h14.500c1.500 0 2 1.200 1.500 2.500-0.500 1.400-1.700 1.700-3.200 1.700l0.700 11.300c0 2.500-1.200 4.500-3.500 4.500H2.500c-1.500 0-2-1.200-1.500-2.500 0.500-1.400 1.700-1.700 3.200-1.700L3.500 6.500C3.300 4 4.800 2 7 2z" fill="#f2c067"/><path d="M7.500 6h9M7.500 9h9.500M8 12h9.500M8 15h9.500M8.500 18h9" stroke="#fff6e0" stroke-width="1.100"/></svg>
<div class="t " style="left:596px;top:66px;letter-spacing:-0.265px;">WaitForID100</div>
<svg style="left:749px;top:71px" width="8" height="5"><path d="M1 0.500h5.400l-2.700 3z" fill="#111"/></svg>
<div class="a" style="left:0px;top:159px;width:1457px;height:848px;background:#2a3a5c"></div>
<div class="a" style="left:0px;top:158px;width:1104px;height:28px;background:#2a3a5c"></div>
<div class="t w" style="left:35px;top:168px;letter-spacing:-0.186px;">C:\...\_temp\2016-06-01_11-38-16_515.trc</div>
<div class="a" style="left:260px;top:164px;width:1px;height:20px;background:#4b5b7c"></div>
<svg style="left:10px;top:165px" width="18" height="18" viewBox="0 0 24 24"><rect x="0" y="4" width="24" height="16" rx="2" fill="#2f6db5"/><path d="M4 12h5M14 12h5" stroke="#6d9bd6" stroke-width="3"/></svg>
<svg style="left:272px;top:165px" width="18" height="18" viewBox="0 0 24 24"><rect x="3" y="3" width="19" height="18" fill="#141414"/><path d="M2.500 3v19h20" stroke="#111" stroke-width="1" stroke-dasharray="1.500 1" fill="none"/><path d="M4 8c4-2 5 2 9 0s5 0 9-1" stroke="#c0563b" stroke-width="1.500" fill="none"/><path d="M4 14c3-4 6 3 9-1s5 3 9-1" stroke="#3aaa78" stroke-width="1.300" fill="none"/><path d="M4 19c3-3 6 2 9-1s5 2 9-1" stroke="#5a8fd0" stroke-width="1.200" fill="none"/></svg>
<div class="t w" style="left:295px;top:168px;letter-spacing:-0.259px;">C:\...\Engine _Vehicle Speed.plt</div>
<div class="a" style="left:476px;top:163px;width:141px;height:25px;background:#fdf0cd"></div>
<div class="t " style="left:510px;top:168px;letter-spacing:-0.132px;">Receive / Transmit</div>
<svg style="left:485px;top:166px" width="16" height="16" viewBox="0 0 24 24"><rect x="5.500" y="1.500" width="13" height="14" fill="#fff" stroke="#555" stroke-width="1.300"/><path d="M8 5.500h8M8 9.500h8" stroke="#555" stroke-width="1.300"/><path d="M0 21.500h24" stroke="#3aaa78" stroke-width="2.600"/><rect x="10" y="16" width="4" height="5" fill="#3aaa78"/></svg>
<div class="a" style="left:0px;top:186px;width:1103px;height:3px;background:#fdf1dc"></div>
<svg style="left:1070px;top:168px" width="30" height="12"><path d="M2 4h9l-4.500 4.500z" fill="#e8ecf3"/><path d="M16 1.500l8 8m0-8l-8 8" stroke="#e8ecf3" stroke-width="1.700" fill="none"/></svg>
<div class="a" style="left:2px;top:189px;width:389px;height:415px;background:linear-gradient(#c5d3e5 0,#d6e3f3 34px,#d6e3f3 100%);border:1px solid #4d4d4d;border-radius:7px 7px 0 0;box-shadow:inset 0 0 0 1px #e4edf8"></div>
<div class="t " style="left:32px;top:202px;color:#8e9aab;letter-spacing:-0.186px;">C:\...\_temp\2016-06-01_11-38-16_515.trc</div>
<div class="a" style="left:280px;top:199px;width:31px;height:18px;background:linear-gradient(#dbe6f3,#c3d2e6);border:1px solid #8797ae;border-radius:3px"></div>
<svg style="left:289px;top:207px" width="13" height="6"><rect x="1" y="1" width="10" height="3.500" rx="1" fill="#fff" stroke="#555" stroke-width="1"/></svg>
<div class="a" style="left:314px;top:199px;width:31px;height:18px;background:linear-gradient(#dbe6f3,#c3d2e6);border:1px solid #8797ae;border-radius:3px"></div>
<svg style="left:323px;top:202px" width="13" height="11"><rect x="1" y="1" width="10" height="8" fill="#fff" stroke="#555" stroke-width="1"/><rect x="3.500" y="3.500" width="5" height="3" fill="#fff" stroke="#555" stroke-width="1"/></svg>
<div class="a" style="left:348px;top:199px;width:31px;height:18px;background:linear-gradient(#dbe6f3,#c3d2e6);border:1px solid #8797ae;border-radius:3px"></div>
<svg style="left:357px;top:202px" width="13" height="11"><path d="M1.500 1.500h3l2 2.300 2-2.300h3l-3.500 4 3.500 4h-3l-2-2.300-2 2.300h-3l3.500-4z" fill="#fff" stroke="#555" stroke-width="1"/></svg>
<svg style="left:10px;top:200px" width="17" height="17" viewBox="0 0 24 24"><path d="M3 1h12l6 6v16h-18z" fill="#fff" stroke="#555" stroke-width="1"/><path d="M15 1v6h6" fill="none" stroke="#555" stroke-width="1"/><rect x="1" y="11" width="19" height="9" rx="1" fill="#2f6db5"/><path d="M4 15.500h4M12 15.500h4" stroke="#fff" stroke-width="2.200"/></svg>
<div class="a" style="left:9px;top:221px;width:373px;height:33px;background:#b5c3d9"></div>
<svg style="left:9px;top:221px" width="375" height="33"><circle cx="18" cy="16" r="10" fill="#9aa3b1"/><rect x="40.500" y="6" width="6" height="21" fill="#f0b652"/><rect x="51" y="6" width="6" height="21" fill="#f0b652"/><rect x="71" y="7" width="18" height="18" fill="#3b78b8"/><path d="M100 5.500v21l22-10.500z" fill="#a3abbb"/><path d="M141 8.500a8.500 8.500 0 1 0 8.500 4" fill="none" stroke="#2f74b7" stroke-width="4.200"/><path d="M139 2v12l9-6z" fill="#2f74b7" transform="rotate(8 141 8)"/><rect x="158" y="4" width="1" height="25" fill="#8f9db4"/></svg>
<div class="t " style="left:176px;top:230px;letter-spacing:-0.171px;">Filter:</div>
<div class="a" style="left:212px;top:226px;width:170px;height:21px;background:#fff;border:1px solid #aab4c4"></div>
<svg style="left:218px;top:230px" width="14" height="13"><path d="M2 2l9 9m0-9l-9 9" stroke="#a9a9a9" stroke-width="3"/></svg>
<div class="t " style="left:234px;top:230px;letter-spacing:-0.047px;">None</div>
<svg style="left:370px;top:235px" width="8" height="5"><path d="M1 0.500h5.400l-2.700 3z" fill="#111"/></svg>
<div class="a" style="left:9px;top:254px;width:373px;height:315px;background:#fff"></div>
<div class="a" style="left:9px;top:275px;width:24px;height:294px;background:#f3f3f3"></div>
<div class="t " style="left:39px;top:258px;letter-spacing:-0.093px;">Time (rel.)</div>
<div class="t " style="left:121px;top:258px;letter-spacing:-0.829px;">Bus</div>
<div class="t " style="left:157px;top:258px;letter-spacing:-0.135px;">ID (hex.) / Symbol</div>
<div class="t " style="left:283px;top:258px;letter-spacing:-0.629px;">Rx/Tx</div>
<div class="t " style="left:325px;top:258px;letter-spacing:-0.454px;">Type</div>
<div class="a" style="left:115px;top:256px;width:1px;height:16px;background:#e3e3e3"></div>
<div class="a" style="left:150px;top:256px;width:1px;height:16px;background:#e3e3e3"></div>
<div class="a" style="left:277px;top:256px;width:1px;height:16px;background:#e3e3e3"></div>
<div class="a" style="left:318px;top:256px;width:1px;height:16px;background:#e3e3e3"></div>
<div class="t mono" style="left:58px;top:277px;">58,9857</div>
<div class="t mono" style="left:121px;top:277px;">1</div>
<div class="t mono" style="left:156px;top:277px;letter-spacing:-0.028px;">TCO1</div>
<div class="t mono" style="left:282px;top:277px;">Rx</div>
<div class="t mono" style="left:324px;top:277px;letter-spacing:-0.900px;">Data</div>
<div class="t mono" style="left:58px;top:292px;">59,0044</div>
<div class="t mono" style="left:121px;top:292px;">1</div>
<div class="t mono" style="left:156px;top:292px;letter-spacing:-0.703px;">EEC1</div>
<div class="t mono" style="left:282px;top:292px;">Rx</div>
<div class="t mono" style="left:324px;top:292px;letter-spacing:-0.900px;">Data</div>
<div class="t mono" style="left:58px;top:307px;">59,0245</div>
<div class="t mono" style="left:121px;top:307px;">1</div>
<div class="t mono" style="left:156px;top:307px;letter-spacing:-0.703px;">EEC1</div>
<div class="t mono" style="left:282px;top:307px;">Rx</div>
<div class="t mono" style="left:324px;top:307px;letter-spacing:-0.900px;">Data</div>
<div class="t mono" style="left:58px;top:322px;">59,0355</div>
<div class="t mono" style="left:121px;top:322px;">1</div>
<div class="t mono" style="left:156px;top:322px;">CCVS1</div>
<div class="t mono" style="left:282px;top:322px;">Rx</div>
<div class="t mono" style="left:324px;top:322px;letter-spacing:-0.900px;">Data</div>
<div class="t mono" style="left:58px;top:337px;">59,0358</div>
<div class="t mono" style="left:121px;top:337px;">1</div>
<div class="t mono" style="left:156px;top:337px;">EEC2</div>
<div class="t mono" style="left:282px;top:337px;">Rx</div>
<div class="t mono" style="left:324px;top:337px;letter-spacing:-0.900px;">Data</div>
<div class="t mono" style="left:58px;top:352px;">59,0361</div>
<div class="t mono" style="left:121px;top:352px;">1</div>
<div class="t mono" style="left:156px;top:352px;letter-spacing:-0.028px;">TCO1</div>
<div class="t mono" style="left:282px;top:352px;">Rx</div>
<div class="t mono" style="left:324px;top:352px;letter-spacing:-0.900px;">Data</div>
<div class="t mono" style="left:58px;top:367px;">59,0436</div>
<div class="t mono" style="left:121px;top:367px;">1</div>
<div class="t mono" style="left:156px;top:367px;letter-spacing:-0.703px;">EEC1</div>
<div class="t mono" style="left:282px;top:367px;">Rx</div>
<div class="t mono" style="left:324px;top:367px;letter-spacing:-0.900px;">Data</div>
<div class="t mono" style="left:58px;top:382px;">59,0647</div>
<div class="t mono" style="left:121px;top:382px;">1</div>
<div class="t mono" style="left:156px;top:382px;letter-spacing:-0.703px;">EEC1</div>
<div class="t mono" style="left:282px;top:382px;">Rx</div>
<div class="t mono" style="left:324px;top:382px;letter-spacing:-0.900px;">Data</div>
<div class="t mono" style="left:58px;top:397px;">59,0837</div>
<div class="t mono" style="left:121px;top:397px;">1</div>
<div class="t mono" style="left:156px;top:397px;">EEC2</div>
<div class="t mono" style="left:282px;top:397px;">Rx</div>
<div class="t mono" style="left:324px;top:397px;letter-spacing:-0.900px;">Data</div>
<div class="t mono" style="left:58px;top:412px;">59,0840</div>
<div class="t mono" style="left:121px;top:412px;">1</div>
<div class="t mono" style="left:156px;top:412px;letter-spacing:-0.028px;">TCO1</div>
<div class="t mono" style="left:282px;top:412px;">Rx</div>
<div class="t mono" style="left:324px;top:412px;letter-spacing:-0.900px;">Data</div>
<div class="t mono" style="left:58px;top:427px;">59,0843</div>
<div class="t mono" style="left:121px;top:427px;">1</div>
<div class="t mono" style="left:156px;top:427px;letter-spacing:-0.703px;">EEC1</div>
<div class="t mono" style="left:282px;top:427px;">Rx</div>
<div class="t mono" style="left:324px;top:427px;letter-spacing:-0.900px;">Data</div>
<div class="t mono" style="left:58px;top:442px;">59,1037</div>
<div class="t mono" style="left:121px;top:442px;">1</div>
<div class="t mono" style="left:156px;top:442px;letter-spacing:-0.703px;">EEC1</div>
<div class="t mono" style="left:282px;top:442px;">Rx</div>
<div class="t mono" style="left:324px;top:442px;letter-spacing:-0.900px;">Data</div>
<div class="t mono" style="left:58px;top:457px;">59,1238</div>
<div class="t mono" style="left:121px;top:457px;">1</div>
<div class="t mono" style="left:156px;top:457px;letter-spacing:-0.703px;">EEC1</div>
<div class="t mono" style="left:282px;top:457px;">Rx</div>
<div class="t mono" style="left:324px;top:457px;letter-spacing:-0.900px;">Data</div>
<div class="t mono" style="left:58px;top:472px;">59,1353</div>
<div class="t mono" style="left:121px;top:472px;">1</div>
<div class="t mono" style="left:156px;top:472px;">CCVS1</div>
<div class="t mono" style="left:282px;top:472px;">Rx</div>
<div class="t mono" style="left:324px;top:472px;letter-spacing:-0.900px;">Data</div>
<div class="t mono" style="left:58px;top:487px;">59,1356</div>
<div class="t mono" style="left:121px;top:487px;">1</div>
<div class="t mono" style="left:156px;top:487px;">EEC2</div>
<div class="t mono" style="left:282px;top:487px;">Rx</div>
<div class="t mono" style="left:324px;top:487px;letter-spacing:-0.900px;">Data</div>
<div class="t mono" style="left:58px;top:502px;">59,1359</div>
<div class="t mono" style="left:121px;top:502px;">1</div>
<div class="t mono" style="left:156px;top:502px;letter-spacing:-0.028px;">TCO1</div>
<div class="t mono" style="left:282px;top:502px;">Rx</div>
<div class="t mono" style="left:324px;top:502px;letter-spacing:-0.900px;">Data</div>
<div class="t mono" style="left:58px;top:517px;">59,1443</div>
<div class="t mono" style="left:121px;top:517px;">1</div>
<div class="t mono" style="left:156px;top:517px;letter-spacing:-0.703px;">EEC1</div>
<div class="t mono" style="left:282px;top:517px;">Rx</div>
<div class="t mono" style="left:324px;top:517px;letter-spacing:-0.900px;">Data</div>
<div class="t mono" style="left:58px;top:532px;">59,1643</div>
<div class="t mono" style="left:121px;top:532px;">1</div>
<div class="t mono" style="left:156px;top:532px;letter-spacing:-0.703px;">EEC1</div>
<div class="t mono" style="left:282px;top:532px;">Rx</div>
<div class="t mono" style="left:324px;top:532px;letter-spacing:-0.900px;">Data</div>
<div class="a" style="left:365px;top:273px;width:17px;height:296px;background:#f0f0f0"></div>
<svg style="left:369px;top:280px" width="10" height="7"><path d="M1 5.500l4-4 4 4" stroke="#444" stroke-width="1.600" fill="none"/></svg>
<svg style="left:369px;top:556px" width="10" height="7"><path d="M1 1l4 4 4-4" stroke="#444" stroke-width="1.600" fill="none"/></svg>
<div class="a" style="left:366px;top:535px;width:15px;height:17px;background:#c9c9c9"></div>
<div class="a" style="left:9px;top:569px;width:373px;height:27px;background:#2a3a5c"></div>
<svg style="left:15px;top:575px" width="16" height="16"><circle cx="8" cy="8" r="7" fill="#d9533c"/></svg>
<div class="t w" style="left:35px;top:576px;letter-spacing:-0.329px;">Started</div>
<div class="t w" style="left:135px;top:576px;letter-spacing:-0.636px;">File</div>
<div class="t w" style="left:198px;top:576px;letter-spacing:-0.735px;">59,3388 s</div>
<div class="t w" style="left:284px;top:576px;letter-spacing:-0.247px;">Total: 6427</div>
<svg style="left:368px;top:582px" width="13" height="13" fill="#dfe5ee"><rect x="9" y="1" width="2" height="2"/><rect x="5" y="5" width="2" height="2"/><rect x="9" y="5" width="2" height="2"/><rect x="1" y="9" width="2" height="2"/><rect x="5" y="9" width="2" height="2"/><rect x="9" y="9" width="2" height="2"/></svg>
<div class="a" style="left:390px;top:189px;width:713px;height:415px;background:linear-gradient(#c5d3e5 0,#d6e3f3 34px,#d6e3f3 100%);border:1px solid #4d4d4d;border-radius:7px 7px 0 0;box-shadow:inset 0 0 0 1px #e4edf8"></div>
<div class="t " style="left:420px;top:202px;color:#8e9aab;letter-spacing:-0.114px;">C:\...\Engine &amp; Vehicle Speed.plt</div>
<div class="a" style="left:994px;top:199px;width:31px;height:18px;background:linear-gradient(#dbe6f3,#c3d2e6);border:1px solid #8797ae;border-radius:3px"></div>
<svg style="left:1003px;top:207px" width="13" height="6"><rect x="1" y="1" width="10" height="3.500" rx="1" fill="#fff" stroke="#555" stroke-width="1"/></svg>
<div class="a" style="left:1028px;top:199px;width:31px;height:18px;background:linear-gradient(#dbe6f3,#c3d2e6);border:1px solid #8797ae;border-radius:3px"></div>
<svg style="left:1037px;top:202px" width="13" height="11"><rect x="1" y="1" width="10" height="8" fill="#fff" stroke="#555" stroke-width="1"/><rect x="3.500" y="3.500" width="5" height="3" fill="#fff" stroke="#555" stroke-width="1"/></svg>
<div class="a" style="left:1062px;top:199px;width:31px;height:18px;background:linear-gradient(#dbe6f3,#c3d2e6);border:1px solid #8797ae;border-radius:3px"></div>
<svg style="left:1071px;top:202px" width="13" height="11"><path d="M1.500 1.500h3l2 2.300 2-2.300h3l-3.500 4 3.500 4h-3l-2-2.300-2 2.300h-3l3.500-4z" fill="#fff" stroke="#555" stroke-width="1"/></svg>
<svg style="left:399px;top:199px" width="18" height="18" viewBox="0 0 24 24"><rect x="3" y="3" width="19" height="18" fill="#141414"/><path d="M2.500 3v19h20" stroke="#111" stroke-width="1" stroke-dasharray="1.500 1" fill="none"/><path d="M4 8c4-2 5 2 9 0s5 0 9-1" stroke="#c0563b" stroke-width="1.500" fill="none"/><path d="M4 14c3-4 6 3 9-1s5 3 9-1" stroke="#3aaa78" stroke-width="1.300" fill="none"/><path d="M4 19c3-3 6 2 9-1s5 2 9-1" stroke="#5a8fd0" stroke-width="1.200" fill="none"/></svg>
<div class="a" style="left:398px;top:221px;width:697px;height:34px;background:#b5c3d9"></div>
<div class="a" style="left:541px;top:223px;width:30px;height:30px;background:#fdf0c4;border:1px solid #ecd28f"></div>
<div class="t " style="left:936px;top:231px;letter-spacing:-0.222px;">X-Axis span:</div>
<div class="a" style="left:1005px;top:227px;width:83px;height:21px;background:#fff;border:1px solid #aab4c4"></div>
<div class="t " style="left:1009px;top:231px;letter-spacing:-0.109px;">5 min</div>
<svg style="left:1075px;top:236px" width="8" height="5"><path d="M1 0.500h5.400l-2.700 3z" fill="#111"/></svg>
<div class="a" style="left:465px;top:226px;width:1px;height:24px;background:#97a5bc"></div>
<div class="a" style="left:536px;top:226px;width:1px;height:24px;background:#97a5bc"></div>
<div class="a" style="left:606px;top:226px;width:1px;height:24px;background:#97a5bc"></div>
<div class="a" style="left:676px;top:226px;width:1px;height:24px;background:#97a5bc"></div>
<div class="a" style="left:778px;top:226px;width:1px;height:24px;background:#97a5bc"></div>
<div class="a" style="left:875px;top:226px;width:1px;height:24px;background:#97a5bc"></div>
<div class="a" style="left:929px;top:226px;width:1px;height:24px;background:#97a5bc"></div>
<svg style="left:0;top:0" width="1100" height="260"><g transform="translate(404.0 226.5) scale(1.0)"><rect x="3" y="3" width="19" height="18" fill="#141414"/><path d="M2.500 3v19h20" stroke="#111" stroke-width="1" stroke-dasharray="1.500 1" fill="none"/><path d="M4 8c4-2 5 2 9 0s5 0 9-1" stroke="#c0563b" stroke-width="1.500" fill="none"/><path d="M4 14c3-4 6 3 9-1s5 3 9-1" stroke="#3aaa78" stroke-width="1.300" fill="none"/><path d="M4 19c3-3 6 2 9-1s5 2 9-1" stroke="#5a8fd0" stroke-width="1.200" fill="none"/><circle cx="19" cy="19" r="4.500" fill="#d9432c"/></g><g transform="translate(434.0 226.5) scale(1.0)"><rect x="3" y="3" width="16" height="16" fill="#a9a9a9"/><path d="M2.500 3v17h17" stroke="#999" stroke-dasharray="1.500 1" fill="none"/><rect x="14" y="14" width="8" height="8" fill="#a9a9a9" stroke="#b5c3d9"/></g><g transform="translate(474.0 226.5) scale(1.0)"><path d="M4 2v20l17-10z" fill="#3aaa78"/></g><g transform="translate(503.0 226.5) scale(1.0)"><rect x="5" y="2" width="5.500" height="20" rx="1" fill="#a3acbd"/><rect x="13.500" y="2" width="5.500" height="20" rx="1" fill="#a3acbd"/></g><g transform="translate(544.0 226.5) scale(1.0)"><path d="M12 1.500v21M1.500 12h21" stroke="#111" stroke-width="1.300"/><path d="M12 0l3 4h-6zM12 24l3-4h-6zM0 12l4-3v6zM24 12l-4-3v6z" fill="#111"/></g><g transform="translate(575.0 226.5) scale(1.0)"><circle cx="11" cy="11" r="5.500" fill="#fff" stroke="#222" stroke-width="1.600"/><path d="M15 15l6 6" stroke="#1f3f7a" stroke-width="2.600"/><path d="M11 0l2.500 3h-5zM11 23l2.500-3h-5zM0 11l3-2.500v5zM22.500 11l-3-2.500v5z" fill="#111"/></g><g transform="translate(614.0 226.5) scale(1.0)"><circle cx="10" cy="10" r="7.800" fill="#cfd9e8" stroke="#5a5a5a" stroke-width="2.800"/><path d="M16 16l6.500 6.500" stroke="#5a5a5a" stroke-width="3.600"/><path d="M5.500 10h9" stroke="#2f6db5" stroke-width="2.600"/></g><g transform="translate(645.0 226.5) scale(1.0)"><circle cx="10" cy="10" r="7.800" fill="#cfd9e8" stroke="#5a5a5a" stroke-width="2.800"/><path d="M16 16l6.500 6.500" stroke="#5a5a5a" stroke-width="3.600"/><path d="M5.500 10h9M10 5.500v9" stroke="#2f6db5" stroke-width="2.600"/></g><g transform="translate(685.0 226.5) scale(1.0)"><path d="M7 2v17l4-4 3 7 2.500-1-3-7h6z" fill="#fff" stroke="#333" stroke-width="1.200"/></g><g transform="translate(714.0 226.5) scale(1.0)"><rect x="3.500" y="3.500" width="18" height="16" fill="none" stroke="#222" stroke-width="1.200" stroke-dasharray="2 1.500"/><rect x="1.500" y="18.500" width="4" height="4" fill="#555"/></g><g transform="translate(744.0 226.5) scale(1.0)"><path d="M12 2v20" stroke="#111" stroke-width="1.500"/><path d="M3 7l7 5-7 5zM21 7l-7 5 7 5z" fill="#111"/></g><g transform="translate(784.0 226.5) scale(1.0)"><rect x="1" y="1" width="12" height="8" rx="1" fill="#3b78b8"/><path d="M3 5h3M8 5h3" stroke="#fff" stroke-width="1.600"/><g transform="translate(10 10) scale(0.6)"><rect x="3" y="3" width="19" height="18" fill="#141414"/><path d="M2.500 3v19h20" stroke="#111" stroke-width="1" stroke-dasharray="1.500 1" fill="none"/><path d="M4 8c4-2 5 2 9 0s5 0 9-1" stroke="#c0563b" stroke-width="1.500" fill="none"/><path d="M4 14c3-4 6 3 9-1s5 3 9-1" stroke="#3aaa78" stroke-width="1.300" fill="none"/><path d="M4 19c3-3 6 2 9-1s5 2 9-1" stroke="#5a8fd0" stroke-width="1.200" fill="none"/></g><path d="M4 11v5c0 2 1 3 3 3h2" stroke="#2f6db5" stroke-width="1.800" fill="none"/><path d="M8 16l3 3-3 3" stroke="#2f6db5" stroke-width="1.800" fill="none"/></g><g transform="translate(814.0 226.5) scale(1.0)"><g transform="translate(0 0) scale(0.6)"><rect x="3" y="3" width="19" height="18" fill="#141414"/><path d="M2.500 3v19h20" stroke="#111" stroke-width="1" stroke-dasharray="1.500 1" fill="none"/><path d="M4 8c4-2 5 2 9 0s5 0 9-1" stroke="#c0563b" stroke-width="1.500" fill="none"/><path d="M4 14c3-4 6 3 9-1s5 3 9-1" stroke="#3aaa78" stroke-width="1.300" fill="none"/><path d="M4 19c3-3 6 2 9-1s5 2 9-1" stroke="#5a8fd0" stroke-width="1.200" fill="none"/></g><rect x="13" y="12" width="10" height="11" fill="#888"/><text x="18" y="21" text-anchor="middle" font-size="10" font-weight="bold" fill="#fff" font-family="Liberation Sans, sans-serif">,</text><path d="M4 15v3c0 2 1 3 3 3h2" stroke="#2f6db5" stroke-width="1.800" fill="none"/><path d="M8 18l3 3-3 3" stroke="#2f6db5" stroke-width="1.800" fill="none"/></g><g transform="translate(844.0 226.5) scale(1.0)"><path d="M21.500 6.500a6 6 0 0 1-8 5.500L5.500 22a2.300 2.300 0 0 1-3.500-3.500L12 10a6 6 0 0 1 7.500-8l-4 4 0.500 3 3 0.500z" fill="#2f6db5"/></g><g transform="translate(884.0 226.5) scale(1.0)"><rect x="1.500" y="2" width="21" height="19" fill="#dbe6f5" stroke="#5a5a5a" stroke-width="1"/><rect x="1" y="1" width="22" height="5" fill="#3b6fb5"/><path d="M3 8h18" stroke="#555" stroke-width="1" stroke-dasharray="2 1"/><rect x="10" y="10" width="12" height="10" fill="#fff"/><circle cx="19" cy="19" r="5" fill="#2c63a7"/><text x="19" y="22.500" text-anchor="middle" font-size="9" font-weight="bold" fill="#fff" font-family="Liberation Serif, serif">i</text></g></svg>
<svg style="left:398px;top:256px" width="697" height="341" viewBox="398 256 697 341"><defs><linearGradient id="cg" x1="0" y1="0" x2="0" y2="1"><stop offset="0" stop-color="#7f9fd9"/><stop offset="1" stop-color="#5f89d9"/></linearGradient></defs><rect x="398" y="256" width="697" height="341" fill="url(#cg)"/><line x1="494.5" y1="267.5" x2="494.5" y2="538.5" stroke="#fff" stroke-opacity="0.6" stroke-width="1"/><line x1="513.9" y1="267.5" x2="513.9" y2="538.5" stroke="#fff" stroke-opacity="0.28" stroke-width="1"/><line x1="533.3" y1="267.5" x2="533.3" y2="538.5" stroke="#fff" stroke-opacity="0.28" stroke-width="1"/><line x1="552.7" y1="267.5" x2="552.7" y2="538.5" stroke="#fff" stroke-opacity="0.28" stroke-width="1"/><line x1="572.1" y1="267.5" x2="572.1" y2="538.5" stroke="#fff" stroke-opacity="0.28" stroke-width="1"/><line x1="591.5" y1="267.5" x2="591.5" y2="538.5" stroke="#fff" stroke-opacity="0.28" stroke-width="1"/><line x1="610.9" y1="267.5" x2="610.9" y2="538.5" stroke="#fff" stroke-opacity="0.6" stroke-width="1"/><line x1="630.3" y1="267.5" x2="630.3" y2="538.5" stroke="#fff" stroke-opacity="0.28" stroke-width="1"/><line x1="649.7" y1="267.5" x2="649.7" y2="538.5" stroke="#fff" stroke-opacity="0.28" stroke-width="1"/><line x1="669.1" y1="267.5" x2="669.1" y2="538.5" stroke="#fff" stroke-opacity="0.28" stroke-width="1"/><line x1="688.5" y1="267.5" x2="688.5" y2="538.5" stroke="#fff" stroke-opacity="0.28" stroke-width="1"/><line x1="707.9" y1="267.5" x2="707.9" y2="538.5" stroke="#fff" stroke-opacity="0.28" stroke-width="1"/><line x1="727.3" y1="267.5" x2="727.3" y2="538.5" stroke="#fff" stroke-opacity="0.6" stroke-width="1"/><line x1="746.7" y1="267.5" x2="746.7" y2="538.5" stroke="#fff" stroke-opacity="0.28" stroke-width="1"/><line x1="766.1" y1="267.5" x2="766.1" y2="538.5" stroke="#fff" stroke-opacity="0.28" stroke-width="1"/><line x1="785.5" y1="267.5" x2="785.5" y2="538.5" stroke="#fff" stroke-opacity="0.28" stroke-width="1"/><line x1="804.9" y1="267.5" x2="804.9" y2="538.5" stroke="#fff" stroke-opacity="0.28" stroke-width="1"/><line x1="824.3" y1="267.5" x2="824.3" y2="538.5" stroke="#fff" stroke-opacity="0.28" stroke-width="1"/><line x1="843.7" y1="267.5" x2="843.7" y2="538.5" stroke="#fff" stroke-opacity="0.6" stroke-width="1"/><line x1="863.1" y1="267.5" x2="863.1" y2="538.5" stroke="#fff" stroke-opacity="0.28" stroke-width="1"/><line x1="882.5" y1="267.5" x2="882.5" y2="538.5" stroke="#fff" stroke-opacity="0.28" stroke-width="1"/><line x1="901.9" y1="267.5" x2="901.9" y2="538.5" stroke="#fff" stroke-opacity="0.28" stroke-width="1"/><line x1="921.3" y1="267.5" x2="921.3" y2="538.5" stroke="#fff" stroke-opacity="0.28" stroke-width="1"/><line x1="940.7" y1="267.5" x2="940.7" y2="538.5" stroke="#fff" stroke-opacity="0.28" stroke-width="1"/><line x1="960.1" y1="267.5" x2="960.1" y2="538.5" stroke="#fff" stroke-opacity="0.6" stroke-width="1"/><line x1="979.5" y1="267.5" x2="979.5" y2="538.5" stroke="#fff" stroke-opacity="0.28" stroke-width="1"/><line x1="998.9" y1="267.5" x2="998.9" y2="538.5" stroke="#fff" stroke-opacity="0.28" stroke-width="1"/><line x1="1018.3" y1="267.5" x2="1018.3" y2="538.5" stroke="#fff" stroke-opacity="0.28" stroke-width="1"/><line x1="1037.7" y1="267.5" x2="1037.7" y2="538.5" stroke="#fff" stroke-opacity="0.28" stroke-width="1"/><path d="M473.6 409.0 L483.8 411.5 L494.0 414.8 L501.6 414.8 L506.7 420.4 L514.3 430.6 L521.9 441.5 L532.1 441.5 L538.4 450.9 L547.3 468.6 L560.0 490.2 L568.9 511.8 L579.0 532.1 L589.2 532.1 L595.5 523.2 L605.7 513.1 L613.3 503.7 L618.4 502.9 L628.6 492.3 L636.2 489.5 L643.8 482.6 L650.1 480.6 L681.9 480.6 L688.2 478.3 L692.0 482.6 L700.9 504.2 L707.3 523.2 L712.4 525.8 L717.4 518.2 L726.3 504.2 L735.2 500.4 L740.0 491.5 L746.3 489.0 L757.8 476.3 L765.4 472.5 L778.1 458.5 L873.3 457.7 L878.4 461.5 L892.4 485.2 L905.1 497.8 L915.2 520.7 L925.4 520.2 L940.6 521.2 L953.3 504.2 L958.4 501.7 L966.0 492.3 L974.9 487.7 L985.1 475.8 L996.5 472.5 L1006.6 460.3 L1055.7 460.3 L1055.7 532.5 L473.6 532.5 Z" fill="#223f72"/><path d="M473.6 300.7 L482.5 302.2 L487.6 313.4 L496.5 326.6 L509.2 329.9 L513.0 356.6 L514.8 305.8 L520.6 333.7 L529.0 349.0 L530.3 300.7 L533.3 303.2 L539.7 327.4 L544.2 357.8 L545.8 310.9 L549.1 360.4 L551.1 290.6 L554.9 309.6 L560.0 361.7 L561.0 276.6 L563.8 305.8 L567.6 362.9 L569.1 304.5 L572.7 356.6 L579.0 387.1 L587.9 387.1 L598.1 335.0 L603.2 327.4 L610.8 299.4 L614.8 294.4 L615.9 366.7 L618.4 351.5 L627.3 321.0 L632.6 301.5 L633.9 376.9 L636.2 356.6 L640.0 342.6 L646.3 324.1 L688.2 324.1 L693.3 327.4 L698.4 356.6 L699.7 332.5 L704.0 366.7 L704.7 341.3 L707.3 366.7 L709.8 376.9 L714.9 376.9 L718.7 359.1 L721.2 323.6 L723.3 310.9 L724.5 349.0 L727.6 327.4 L730.1 315.9 L737.7 309.6 L740.0 299.4 L742.0 299.4 L743.0 365.5 L751.4 333.7 L761.6 294.4 L763.4 294.4 L763.4 387.1 L766.7 354.0 L779.4 293.1 L780.6 293.1 L781.1 374.4 L782.7 336.3 L787.0 327.4 L792.1 307.1 L831.4 307.1 L835.2 307.1 L836.0 379.4 L836.5 369.8 L843.6 369.8 L847.9 358.4 L873.3 358.4 L875.9 355.8 L880.9 355.8 L881.7 368.0 L882.7 321.5 L886.0 361.7 L888.1 302.0 L892.4 356.6 L896.2 362.9 L899.5 362.9 L900.0 328.6 L905.1 361.7 L908.9 371.3 L910.1 342.6 L911.4 371.3 L917.8 378.7 L922.8 379.4 L927.9 374.4 L943.2 373.8 L945.7 356.6 L954.6 304.5 L956.4 359.1 L958.9 346.4 L963.5 342.6 L969.8 300.2 L973.1 299.4 L974.1 340.1 L976.7 340.1 L985.1 293.6 L991.4 293.1 L993.2 365.5 L995.2 359.1 L997.8 356.6 L1005.4 307.1 L1009.2 296.9 L1020.6 296.9 L1021.9 365.5 L1024.4 360.4 L1028.2 359.6 L1055.7 359.6" fill="none" stroke="#2a5290" stroke-width="2.100" stroke-linejoin="round"/><rect x="473.5" y="267.5" width="582.0" height="271.0" fill="none" stroke="#10203c" stroke-width="1" stroke-dasharray="1 1" shape-rendering="crispEdges"/><path d="M468.500 264V391M468.500 406V536" stroke="#e3ebf8" stroke-width="1" fill="none"/><path d="M473 543.500H1056" stroke="#e3ebf8" stroke-width="1" fill="none"/><text x="458" y="296.5" text-anchor="end" font-size="10.670" fill="#f1f5fc">5000</text><path d="M462 292.5h6" stroke="#e3ebf8" stroke-width="1"/><text x="458" y="344.5" text-anchor="end" font-size="10.670" fill="#f1f5fc">2500</text><path d="M462 340.5h6" stroke="#e3ebf8" stroke-width="1"/><text x="458" y="392.5" text-anchor="end" font-size="10.670" fill="#f1f5fc">0</text><path d="M462 388.5h6" stroke="#e3ebf8" stroke-width="1"/><text x="458" y="436.5" text-anchor="end" font-size="10.670" fill="#f1f5fc">100</text><path d="M462 432.5h6" stroke="#e3ebf8" stroke-width="1"/><text x="458" y="487.5" text-anchor="end" font-size="10.670" fill="#f1f5fc">50</text><path d="M462 483.5h6" stroke="#e3ebf8" stroke-width="1"/><text x="458" y="537.5" text-anchor="end" font-size="10.670" fill="#f1f5fc">0</text><path d="M462 533.5h6" stroke="#e3ebf8" stroke-width="1"/><path d="M465 316.5h3" stroke="#e3ebf8" stroke-width="1"/><path d="M465 364.5h3" stroke="#e3ebf8" stroke-width="1"/><path d="M465 458h3" stroke="#e3ebf8" stroke-width="1"/><path d="M465 508h3" stroke="#e3ebf8" stroke-width="1"/><path d="M475.1 544v4" stroke="#e3ebf8" stroke-width="1"/><path d="M494.5 544v7" stroke="#e3ebf8" stroke-width="1"/><path d="M513.9 544v4" stroke="#e3ebf8" stroke-width="1"/><path d="M533.3 544v4" stroke="#e3ebf8" stroke-width="1"/><path d="M552.7 544v4" stroke="#e3ebf8" stroke-width="1"/><path d="M572.1 544v4" stroke="#e3ebf8" stroke-width="1"/><path d="M591.5 544v4" stroke="#e3ebf8" stroke-width="1"/><path d="M610.9 544v7" stroke="#e3ebf8" stroke-width="1"/><path d="M630.3 544v4" stroke="#e3ebf8" stroke-width="1"/><path d="M649.7 544v4" stroke="#e3ebf8" stroke-width="1"/><path d="M669.1 544v4" stroke="#e3ebf8" stroke-width="1"/><path d="M688.5 544v4" stroke="#e3ebf8" stroke-width="1"/><path d="M707.9 544v4" stroke="#e3ebf8" stroke-width="1"/><path d="M727.3 544v7" stroke="#e3ebf8" stroke-width="1"/><path d="M746.7 544v4" stroke="#e3ebf8" stroke-width="1"/><path d="M766.1 544v4" stroke="#e3ebf8" stroke-width="1"/><path d="M785.5 544v4" stroke="#e3ebf8" stroke-width="1"/><path d="M804.9 544v4" stroke="#e3ebf8" stroke-width="1"/><path d="M824.3 544v4" stroke="#e3ebf8" stroke-width="1"/><path d="M843.7 544v7" stroke="#e3ebf8" stroke-width="1"/><path d="M863.1 544v4" stroke="#e3ebf8" stroke-width="1"/><path d="M882.5 544v4" stroke="#e3ebf8" stroke-width="1"/><path d="M901.9 544v4" stroke="#e3ebf8" stroke-width="1"/><path d="M921.3 544v4" stroke="#e3ebf8" stroke-width="1"/><path d="M940.7 544v4" stroke="#e3ebf8" stroke-width="1"/><path d="M960.1 544v7" stroke="#e3ebf8" stroke-width="1"/><path d="M979.5 544v4" stroke="#e3ebf8" stroke-width="1"/><path d="M998.9 544v4" stroke="#e3ebf8" stroke-width="1"/><path d="M1018.3 544v4" stroke="#e3ebf8" stroke-width="1"/><path d="M1037.7 544v4" stroke="#e3ebf8" stroke-width="1"/><text x="494.0" y="563.500" text-anchor="middle" font-size="10.670" fill="#f1f5fc">08:08:00.0000</text><text x="610.4" y="563.500" text-anchor="middle" font-size="10.670" fill="#f1f5fc">08:09:00.0000</text><text x="726.8" y="563.500" text-anchor="middle" font-size="10.670" fill="#f1f5fc">08:10:00.0000</text><text x="843.2" y="563.500" text-anchor="middle" font-size="10.670" fill="#f1f5fc">08:11:00.0000</text><text x="959.6" y="563.500" text-anchor="middle" font-size="10.670" fill="#f1f5fc">08:12:00.0000</text><text x="763.500" y="583" text-anchor="middle" font-size="13.330" font-weight="bold" fill="#f1f5fc">Time</text><text transform="translate(419.500 331) rotate(-90)" text-anchor="middle" font-size="13.330" font-weight="bold" fill="#f1f5fc">Engine Speed</text><text transform="translate(419.500 477) rotate(-90)" text-anchor="middle" font-size="13.330" font-weight="bold" fill="#f1f5fc">Vehicle Speed</text></svg>
<div class="a" style="left:0px;top:839px;width:1104px;height:3px;background:#fdfbe9"></div>
<div class="a" style="left:389px;top:196px;width:2px;height:408px;background:#414141"></div>
<div class="a" style="left:2px;top:604px;width:1101px;height:234px;background:linear-gradient(#9db8da 0,#b9cfea 30px,#c2dcf5 60px,#c2dcf5 calc(100% - 8px),#acd2ef 100%);border:1px solid #4d4d4d;border-radius:7px 7px 0 0;box-shadow:inset 0 0 0 1px #e4edf8"></div>
<div class="t " style="left:31px;top:616px;letter-spacing:-0.132px;">Receive / Transmit</div>
<div class="a" style="left:993px;top:613px;width:31px;height:18px;background:linear-gradient(#cfdcee,#a9bfdc);border:1px solid #60779b;border-radius:3px"></div>
<svg style="left:1002px;top:621px" width="13" height="6"><rect x="1" y="1" width="10" height="3.500" rx="1" fill="#fff" stroke="#555" stroke-width="1"/></svg>
<div class="a" style="left:1027px;top:613px;width:31px;height:18px;background:linear-gradient(#cfdcee,#a9bfdc);border:1px solid #60779b;border-radius:3px"></div>
<svg style="left:1036px;top:616px" width="13" height="11"><rect x="1" y="1" width="10" height="8" fill="#fff" stroke="#555" stroke-width="1"/><rect x="3.500" y="3.500" width="5" height="3" fill="#fff" stroke="#555" stroke-width="1"/></svg>
<div class="a" style="left:1061px;top:613px;width:31px;height:18px;background:linear-gradient(#e8a090,#c8452f 50%,#b83a24);border:1px solid #7c2a1c;border-radius:3px"></div>
<svg style="left:1070px;top:616px" width="13" height="11"><path d="M1.500 1.500h3l2 2.300 2-2.300h3l-3.500 4 3.500 4h-3l-2-2.300-2 2.300h-3l3.500-4z" fill="#fff" stroke="#6b2417" stroke-width="1"/></svg>
<div class="a" style="left:10px;top:635px;width:1085px;height:33px;background:#bcc8dc"></div>
<div class="t " style="left:145px;top:644px;letter-spacing:-0.171px;">Filter:</div>
<div class="a" style="left:181px;top:640px;width:173px;height:22px;background:#fff;border:1px solid #aab4c4"></div>
<svg style="left:187px;top:645px" width="14" height="13"><path d="M2 2l9 9m0-9l-9 9" stroke="#a9a9a9" stroke-width="3"/></svg>
<div class="t " style="left:203px;top:644px;letter-spacing:-0.047px;">None</div>
<svg style="left:340px;top:649px" width="8" height="5"><path d="M1 0.500h5.400l-2.700 3z" fill="#111"/></svg>
<div class="a" style="left:137px;top:639px;width:1px;height:26px;background:#97a5bc"></div>
<svg style="left:0;top:600px" width="1100" height="80" viewBox="0 600 1100 80"><g transform="translate(14.5 639.0) scale(1.0416666666666667)"><rect x="3.5" y="7.5" width="19" height="14" fill="#fff" stroke="#5a5a5a" stroke-width="1"/><path d="M3.5 7.5l9.5 7.700000000000001 9.5-7.700000000000001M3.5 21.5l7.22-7.0M22.5 21.5l-7.22-7.0" fill="none" stroke="#5a5a5a" stroke-width="1"/><path d="M5 2.1l1.02 2.38 2.38 1.02-2.38 1.02-1.02 2.38-1.02-2.38-2.38-1.02 2.38-1.02z" fill="#f3c27a"/><circle cx="5" cy="5.5" r="2.108" fill="#f3c27a"/></g><g transform="translate(44.5 639.0) scale(1.0416666666666667)"><rect x="2.5" y="6.5" width="18" height="13" fill="#c3cad7" stroke="#a3acbd" stroke-width="1"/><path d="M2.5 6.5l9.0 7.15 9.0-7.15M2.5 19.5l6.84-6.5M20.5 19.5l-6.84-6.5" fill="none" stroke="#a3acbd" stroke-width="1"/><path d="M12 21l1-4 7-7 3 3-7 7z" fill="#a3acbd"/></g><g transform="translate(75.5 639.0) scale(1.0416666666666667)"><path d="M3 3h17v10h-9l-4 4v-4H3z" fill="#c3cad7" stroke="#a3acbd" stroke-width="1.500"/><path d="M6 6.500h11M6 9.500h11" stroke="#a3acbd" stroke-width="1"/><path d="M11 22l1-3.500 8-8 2.500 2.500-8 8z" fill="#a3acbd"/></g><g transform="translate(104.5 639.0) scale(1.0416666666666667)"><rect x="2" y="1" width="4.500" height="13" fill="#a3acbd"/><rect x="9" y="1" width="4.500" height="13" fill="#a3acbd"/><path d="M11 10v13l12-6.500z" fill="#a3acbd" stroke="#b6c3d9" stroke-width="1"/></g><g transform="translate(358.5 639.0) scale(1.0416666666666667)"><path d="M2 3h20l-8 9v9l-4-3v-6z" fill="#a3acbd"/><path d="M14 22l9-12" stroke="#a3acbd" stroke-width="2"/></g><g transform="translate(389.5 639.0) scale(1.0416666666666667)"><path d="M2 3h20l-8 9v9l-4-3v-6z" fill="#6a6a6a"/><path d="M13.8 19h8.4M18 14.8v8.4" stroke="#fff" stroke-width="4.0"/><path d="M13.8 19h8.4M18 14.8v8.4" stroke="#3aaa78" stroke-width="2.4"/></g><g transform="translate(11 612)"><rect x="3.500" y="0.500" width="10" height="11" fill="#fff" stroke="#555"/><path d="M5.500 3.500h6M5.500 6.500h6" stroke="#555"/><path d="M0 15.500h17" stroke="#3aaa78" stroke-width="2"/><rect x="7" y="12" width="3" height="3" fill="#3aaa78"/></g></svg>
<div class="a" style="left:10px;top:668px;width:1085px;height:162px;background:#fff"></div>
<div class="a" style="left:10px;top:689px;width:22px;height:141px;background:#fdf0cd"></div>
<div class="a" style="left:32px;top:689px;width:1046px;height:122px;background:#cce4fb"></div>
<svg style="left:13px;top:671px" width="14" height="14"><rect x="1" y="1" width="11" height="5" fill="#fff" stroke="#111" stroke-width="1.400"/><rect x="1" y="8" width="11" height="5" fill="#fff" stroke="#111" stroke-width="1.400"/></svg>
<div class="t " style="left:40px;top:672px;letter-spacing:-0.829px;">Bus</div>
<div class="t " style="left:73px;top:672px;letter-spacing:-0.152px;">CAN-ID (...</div>
<div class="t " style="left:144px;top:672px;letter-spacing:-0.805px;">PGN</div>
<div class="t " style="left:245px;top:672px;letter-spacing:-0.472px;">Len...</div>
<div class="t " style="left:285px;top:672px;letter-spacing:-0.036px;">Symbol</div>
<div class="t " style="left:395px;top:672px;letter-spacing:-0.590px;">Data</div>
<div class="t " style="left:826px;top:672px;letter-spacing:-0.066px;">Timing Errors</div>
<div class="t " style="left:910px;top:672px;letter-spacing:-0.173px;">Cycle T...</div>
<div class="t " style="left:970px;top:672px;letter-spacing:0.134px;">Count</div>
<div class="a" style="left:66px;top:669px;width:1px;height:161px;background:#dfe3ea"></div>
<div class="a" style="left:66px;top:689px;width:1px;height:122px;background:#b9d0e8"></div>
<div class="a" style="left:137px;top:669px;width:1px;height:161px;background:#dfe3ea"></div>
<div class="a" style="left:137px;top:689px;width:1px;height:122px;background:#b9d0e8"></div>
<div class="a" style="left:238px;top:669px;width:1px;height:161px;background:#dfe3ea"></div>
<div class="a" style="left:238px;top:689px;width:1px;height:122px;background:#b9d0e8"></div>
<div class="a" style="left:278px;top:669px;width:1px;height:161px;background:#dfe3ea"></div>
<div class="a" style="left:278px;top:689px;width:1px;height:122px;background:#b9d0e8"></div>
<div class="a" style="left:389px;top:669px;width:1px;height:161px;background:#dfe3ea"></div>
<div class="a" style="left:389px;top:689px;width:1px;height:122px;background:#b9d0e8"></div>
<div class="a" style="left:819px;top:669px;width:1px;height:161px;background:#dfe3ea"></div>
<div class="a" style="left:819px;top:689px;width:1px;height:122px;background:#b9d0e8"></div>
<div class="a" style="left:903px;top:669px;width:1px;height:161px;background:#dfe3ea"></div>
<div class="a" style="left:903px;top:689px;width:1px;height:122px;background:#b9d0e8"></div>
<div class="a" style="left:963px;top:669px;width:1px;height:161px;background:#dfe3ea"></div>
<div class="a" style="left:963px;top:689px;width:1px;height:122px;background:#b9d0e8"></div>
<svg style="left:254px;top:668px" width="9" height="5"><path d="M0.500 0.500l4 3.500 4-3.500" stroke="#777" fill="none"/></svg>
<div class="t " style="left:46px;top:691px;">1</div>
<div class="t " style="left:69px;top:691px;letter-spacing:-0.731px;">18F00400</div>
<div class="t " style="left:140px;top:691px;letter-spacing:-0.835px;">61444</div>
<div class="t " style="left:241px;top:691px;">8</div>
<div class="t " style="left:281px;top:691px;letter-spacing:-0.900px;">EEC1</div>
<div class="t " style="left:906px;top:691px;letter-spacing:-0.665px;">20,0</div>
<div class="t " style="left:966px;top:691px;letter-spacing:-0.755px;">82070</div>
<div class="t " style="left:409px;top:691px;letter-spacing:-0.067px;">EngineTorqueMode</div>
<div class="t " style="left:606px;top:691px;letter-spacing:-0.172px;">= 0</div>
<div class="t " style="left:409px;top:706px;letter-spacing:-0.104px;">ActualEnginePercentTorqueFract</div>
<div class="t " style="left:606px;top:706px;letter-spacing:-0.262px;">= +0.000%</div>
<div class="t " style="left:409px;top:721px;letter-spacing:-0.159px;">DriversDemandEnginePercentTorque</div>
<div class="t " style="left:606px;top:721px;letter-spacing:-0.234px;">= -125 %</div>
<div class="t " style="left:409px;top:736px;letter-spacing:-0.079px;">ActualEnginePercentTorque</div>
<div class="t " style="left:606px;top:736px;letter-spacing:-0.234px;">= -125 %</div>
<div class="t " style="left:409px;top:751px;letter-spacing:-0.443px;">EngineSpeed</div>
<div class="t " style="left:606px;top:751px;letter-spacing:-0.296px;">= 1536,3 rpm</div>
<div class="t " style="left:409px;top:766px;letter-spacing:-0.097px;">SrcAddrOfCtrllingDevForEngCtrl</div>
<div class="t " style="left:606px;top:766px;letter-spacing:-0.172px;">= 0</div>
<div class="t " style="left:409px;top:781px;letter-spacing:-0.206px;">EngineStarterMode</div>
<div class="t " style="left:606px;top:781px;letter-spacing:-0.091px;">= start not requested</div>
<div class="t " style="left:409px;top:796px;letter-spacing:-0.131px;">EngineDemandPercentTorque</div>
<div class="t " style="left:606px;top:796px;letter-spacing:-0.234px;">= -125 %</div>
<svg style="left:394px;top:693px" width="11" height="11"><rect x="0.500" y="0.500" width="9" height="9" fill="#fff" stroke="#8a8a8a"/><path d="M2.500 5h5" stroke="#333"/></svg>
<svg style="left:394px;top:816px" width="11" height="11"><rect x="0.500" y="0.500" width="9" height="9" fill="#fff" stroke="#8a8a8a"/><path d="M2.500 5h5" stroke="#333"/></svg>
<div class="t " style="left:46px;top:814px;">1</div>
<div class="t " style="left:69px;top:814px;letter-spacing:-0.900px;">18FE6C00</div>
<div class="t " style="left:140px;top:814px;letter-spacing:-0.875px;">65132</div>
<div class="t " style="left:241px;top:814px;">8</div>
<div class="t " style="left:281px;top:814px;letter-spacing:-0.900px;">TCO1</div>
<div class="t " style="left:409px;top:814px;letter-spacing:-0.199px;">Driver1WorkingState</div>
<div class="t " style="left:545px;top:814px;letter-spacing:0.112px;">= Work</div>
<div class="t " style="left:906px;top:814px;letter-spacing:-0.740px;">49,2</div>
<div class="t " style="left:966px;top:814px;letter-spacing:-0.835px;">32782</div>
<svg style="left:807px;top:814px" width="12" height="12"><rect x="0.500" y="0.500" width="10" height="10" fill="#f4f4f4" stroke="#aaa"/><path d="M5.500 2.500l3 3.500h-2v2.500h-2v-2.500h-2z" fill="#c9b98a"/></svg>
<div class="a" style="left:10px;top:689px;width:22px;height:122px"><div style="position:absolute;left:11px;top:69px;transform:translate(-50%,-50%) rotate(-90deg);font-size:19.5px;white-space:pre;line-height:20px">Receive</div></div>
<div class="a" style="left:1078px;top:689px;width:17px;height:141px;background:#f0f0f0"></div>
<svg style="left:1081px;top:694px" width="10" height="7"><path d="M1 5.500l4-4 4 4" stroke="#444" stroke-width="1.600" fill="none"/></svg>
<svg style="left:1081px;top:819px" width="10" height="7"><path d="M1 1l4 4 4-4" stroke="#444" stroke-width="1.600" fill="none"/></svg>
<div class="a" style="left:1079px;top:781px;width:14px;height:17px;background:#c9c9c9"></div>
<div class="a" style="left:0px;top:846px;width:21px;height:132px;background:#3f5683"></div>
<svg style="left:5px;top:851px" width="11" height="11"><path d="M1 1l9 9m0-9l-9 9" stroke="#fff" stroke-width="1.700"/></svg>
<div class="a" style="left:0;top:885px;width:21px;height:93px"><div class="w" style="position:absolute;left:10px;top:56px;transform:translate(-50%,-50%) rotate(-90deg);white-space:pre;line-height:14px">Connections</div></div>
<div class="a" style="left:21px;top:846px;width:1081px;height:34px;background:#bcc8dc"></div>
<div class="t " style="left:54px;top:856px;letter-spacing:-0.227px;">Add...</div>
<div class="t " style="left:120px;top:856px;letter-spacing:-0.732px;">Reset</div>
<div class="t " style="left:189px;top:856px;letter-spacing:-0.153px;">Claim <u>A</u>ddress</div>
<div class="t " style="left:300px;top:856px;color:#9aa4b5;letter-spacing:-0.502px;">Release A<u>d</u>dress</div>
<div class="a" style="left:154px;top:850px;width:1px;height:26px;background:#97a5bc"></div>
<div class="a" style="left:275px;top:850px;width:1px;height:26px;background:#97a5bc"></div>
<svg style="left:0;top:840px" width="1110" height="140" viewBox="0 840 1110 140"><g transform="translate(25.5 848.5) scale(1.2083333333333333)"><g fill="none" stroke="#2f6db5" stroke-width="2.700" stroke-linecap="round"><path d="M10.500 6.500l2.500-2.500a3.700 3.700 0 0 1 5.300 5.300l-3.600 3.600a3.700 3.700 0 0 1-5.300 0"/><path d="M12.500 16l-2.500 2.500a3.700 3.700 0 0 1-5.300-5.300l3.600-3.600a3.700 3.700 0 0 1 5.300 0"/></g><path d="M13.8 18.5h8.4M18 14.3v8.4" stroke="#fff" stroke-width="4.0"/><path d="M13.8 18.5h8.4M18 14.3v8.4" stroke="#3aaa78" stroke-width="2.4"/></g><g transform="translate(93.0 851.0) scale(1.0)"><circle cx="5" cy="12" r="4.200" fill="#3a3a3a"/><path d="M10 12h12" stroke="#3a3a3a" stroke-width="2.600"/><path d="M16 6.500l-6 5.500 6 5.500" stroke="#3a3a3a" stroke-width="2.600" fill="none"/></g><g transform="translate(163.0 851.0) scale(1.0)"><rect x="3" y="1" width="2.600" height="22" fill="#6a6a6a"/><path d="M7 2l15 6.500L7 15z" fill="#2f6db5"/></g><g transform="translate(275.0 851.0) scale(1.0)"><rect x="3" y="1" width="2.600" height="22" fill="#a3acbd"/><path d="M7 2l15 6.500L7 15z" fill="#a3acbd"/><path d="M14 14l7 7m0-7l-7 7" stroke="#a3acbd" stroke-width="2.400"/></g></svg>
<div class="a" style="left:21px;top:880px;width:1081px;height:98px;background:#fff"></div>
<div class="t " style="left:55px;top:884px;letter-spacing:-0.829px;">Bus</div>
<div class="t " style="left:91px;top:884px;letter-spacing:-0.204px;">Name</div>
<div class="t " style="left:308px;top:884px;letter-spacing:0.071px;">Protocol</div>
<div class="t " style="left:397px;top:884px;letter-spacing:0.078px;">Connection</div>
<div class="t " style="left:614px;top:884px;letter-spacing:-0.461px;">Bit Rate</div>
<div class="t " style="left:724px;top:884px;letter-spacing:-0.539px;">Status</div>
<div class="t " style="left:813px;top:884px;letter-spacing:-0.332px;">Overruns</div>
<div class="t " style="left:892px;top:884px;letter-spacing:-0.235px;">QXmtFulls</div>
<div class="t " style="left:971px;top:884px;letter-spacing:-0.490px;">Bus Load</div>
<div class="a" style="left:45px;top:881px;width:1px;height:19px;background:#e3e3e3"></div>
<div class="a" style="left:84px;top:881px;width:1px;height:19px;background:#e3e3e3"></div>
<div class="a" style="left:301px;top:881px;width:1px;height:19px;background:#e3e3e3"></div>
<div class="a" style="left:390px;top:881px;width:1px;height:19px;background:#e3e3e3"></div>
<div class="a" style="left:607px;top:881px;width:1px;height:19px;background:#e3e3e3"></div>
<div class="a" style="left:717px;top:881px;width:1px;height:19px;background:#e3e3e3"></div>
<div class="a" style="left:806px;top:881px;width:1px;height:19px;background:#e3e3e3"></div>
<div class="a" style="left:885px;top:881px;width:1px;height:19px;background:#e3e3e3"></div>
<div class="a" style="left:964px;top:881px;width:1px;height:19px;background:#e3e3e3"></div>
<div class="a" style="left:21px;top:901px;width:1081px;height:19px;background:#d9d9d9"></div>
<svg style="left:26px;top:904px" width="13" height="13"><rect x="0.500" y="0.500" width="12" height="12" fill="#fff" stroke="#333"/><path d="M2.800 6.500l2.500 2.700 4.800-5.700" stroke="#111" stroke-width="1.700" fill="none"/></svg>
<div class="t " style="left:62px;top:904px;">1</div>
<div class="t " style="left:106px;top:904px;letter-spacing:-0.170px;">FMS Connection</div>
<div class="t " style="left:302px;top:904px;letter-spacing:-0.900px;">J1939</div>
<div class="t " style="left:412px;top:904px;letter-spacing:-0.386px;">BlackBox 1 - 500@pcan_usb</div>
<div class="t " style="left:608px;top:904px;letter-spacing:-0.230px;">500 kBit/s</div>
<div class="a" style="left:967px;top:902px;width:131px;height:17px;background:#fff;border:1px solid #e6e6e6"></div>
<div class="t" style="left:967px;top:904px;width:131px;text-align:center">3,1%</div>
<svg style="left:26px;top:923px" width="13" height="13"><rect x="0.500" y="0.500" width="12" height="12" fill="#fff" stroke="#333"/></svg>
<div class="t " style="left:62px;top:923px;">2</div>
<div class="t " style="left:106px;top:923px;letter-spacing:-0.148px;">CAN FD Connection</div>
<div class="t " style="left:302px;top:923px;letter-spacing:-0.381px;">CAN</div>
<div class="t " style="left:412px;top:923px;letter-spacing:-0.329px;">CAN FD B - 500 &gt; 12M@pcan_usb</div>
<div class="t " style="left:608px;top:923px;letter-spacing:-0.097px;">Nominal 500 kBit/s...</div>
<div class="a" style="left:967px;top:921px;width:131px;height:17px;background:#fff;border:1px solid #e6e6e6"></div>
<div class="t" style="left:967px;top:923px;width:131px;text-align:center">0,0%</div>
<svg style="left:26px;top:942px" width="13" height="13"><rect x="0.500" y="0.500" width="12" height="12" fill="#fff" stroke="#333"/><path d="M2.800 6.500l2.500 2.700 4.800-5.700" stroke="#111" stroke-width="1.700" fill="none"/></svg>
<div class="t " style="left:62px;top:942px;">3</div>
<div class="t " style="left:106px;top:942px;letter-spacing:-0.106px;">PCAN-Gateway Connection</div>
<div class="t " style="left:302px;top:942px;letter-spacing:-0.381px;">CAN</div>
<div class="t " style="left:412px;top:942px;letter-spacing:-0.241px;">WhiteLAN1 - 500@pcan_lan</div>
<div class="t " style="left:608px;top:942px;letter-spacing:-0.230px;">500 kBit/s</div>
<div class="a" style="left:967px;top:940px;width:131px;height:17px;background:#fff;border:1px solid #e6e6e6"></div>
<div class="t" style="left:967px;top:942px;width:131px;text-align:center">0,0%</div>
<div class="t " style="left:718px;top:904px;color:#3a9a3a;letter-spacing:-0.900px;">OK</div>
<div class="t " style="left:807px;top:904px;">0</div>
<div class="t " style="left:886px;top:904px;">0</div>
<div class="a" style="left:968px;top:903px;width:4px;height:15px;background:#4848d8"></div>
<div class="a" style="left:1099px;top:903px;width:2px;height:15px;background:#c33"></div>
<svg style="left:86px;top:901px" width="19" height="19" viewBox="0 0 24 24"><g fill="none" stroke="#2a66a8" stroke-width="2.700" stroke-linecap="round"><path d="M10.500 6.500l2.500-2.500a3.700 3.700 0 0 1 5.300 5.300l-3.600 3.600a3.700 3.700 0 0 1-5.300 0"/><path d="M12.500 16l-2.500 2.500a3.700 3.700 0 0 1-5.300-5.300l3.600-3.600a3.700 3.700 0 0 1 5.300 0"/></g></svg>
<svg style="left:86px;top:920px" width="19" height="19" viewBox="0 0 24 24"><g fill="none" stroke="#2a66a8" stroke-width="2.700" stroke-linecap="round"><path d="M10.500 6.500l2.500-2.500a3.700 3.700 0 0 1 5.300 5.300l-3.600 3.600a3.700 3.700 0 0 1-5.300 0"/><path d="M12.500 16l-2.500 2.500a3.700 3.700 0 0 1-5.300-5.300l3.600-3.600a3.700 3.700 0 0 1 5.300 0"/></g><circle cx="17" cy="17" r="5.500" fill="#fff" stroke="#d9432c" stroke-width="2"/><path d="M13.500 20.500l7-7" stroke="#d9432c" stroke-width="2"/></svg>
<svg style="left:86px;top:939px" width="19" height="19" viewBox="0 0 24 24"><g fill="none" stroke="#2a66a8" stroke-width="2.700" stroke-linecap="round"><path d="M10.500 6.500l2.500-2.500a3.700 3.700 0 0 1 5.300 5.300l-3.600 3.600a3.700 3.700 0 0 1-5.300 0"/><path d="M12.500 16l-2.500 2.500a3.700 3.700 0 0 1-5.300-5.300l3.600-3.600a3.700 3.700 0 0 1 5.300 0"/></g></svg>
<svg style="left:392px;top:902px" width="17" height="17" viewBox="0 0 24 24"><path d="M1 12h20" stroke="#2a66a8" stroke-width="2.200"/><path d="M18 8l5 4-5 4z" fill="#2a66a8"/><circle cx="3.500" cy="12" r="3.200" fill="#2a66a8"/><path d="M7 12l4-6h4M9 12l4 6h3" stroke="#2a66a8" stroke-width="1.800" fill="none"/><circle cx="16" cy="6" r="2" fill="#2a66a8"/><rect x="15" y="16" width="4" height="4" fill="#2a66a8"/></svg>
<svg style="left:392px;top:921px" width="17" height="17" viewBox="0 0 24 24"><path d="M1 12h20" stroke="#2a66a8" stroke-width="2.200"/><path d="M18 8l5 4-5 4z" fill="#2a66a8"/><circle cx="3.500" cy="12" r="3.200" fill="#2a66a8"/><path d="M7 12l4-6h4M9 12l4 6h3" stroke="#2a66a8" stroke-width="1.800" fill="none"/><circle cx="16" cy="6" r="2" fill="#2a66a8"/><rect x="15" y="16" width="4" height="4" fill="#2a66a8"/></svg>
<svg style="left:392px;top:940px" width="17" height="17" viewBox="0 0 24 24"><rect x="1.500" y="2.500" width="15" height="13" fill="#e6e6e6" stroke="#999"/><path d="M4 6h6M4 9h4" stroke="#aaa"/><path d="M13 14l8 8m0-8l-8 8" stroke="#d9432c" stroke-width="2.600"/></svg>
<div class="a" style="left:1107px;top:846px;width:19px;height:132px;background:#3f5683"></div>
<svg style="left:1110px;top:851px" width="11" height="11"><path d="M1 1l9 9m0-9l-9 9" stroke="#fff" stroke-width="1.700"/></svg>
<div class="a" style="left:1107px;top:930px;width:19px;height:48px"><div class="w" style="position:absolute;left:9px;top:27px;transform:translate(-50%,-50%) rotate(-90deg);white-space:pre;line-height:14px">Watch</div></div>
<div class="a" style="left:1126px;top:846px;width:330px;height:106px;background:#fff"></div>
<div class="t " style="left:1132px;top:850px;letter-spacing:-0.204px;">Name</div>
<div class="t " style="left:1277px;top:850px;letter-spacing:-0.562px;">Value</div>
<div class="t " style="left:1353px;top:850px;letter-spacing:0.023px;">Meter</div>
<div class="a" style="left:1271px;top:848px;width:1px;height:17px;background:#e3e3e3"></div>
<div class="a" style="left:1347px;top:848px;width:1px;height:17px;background:#e3e3e3"></div>
<div class="t " style="left:1127px;top:869px;font-size:11px;letter-spacing:-0.406px;">EngineSpeed</div>
<div class="t " style="left:1273px;top:869px;font-size:11px;letter-spacing:-0.136px;">1536,3 rpm</div>
<div class="a" style="left:1358px;top:871px;width:16px;height:10px;background:#4444e0"></div>
<div class="a" style="left:1357px;top:869px;width:1px;height:13px;background:#111"></div>
<div class="a" style="left:1357px;top:875px;width:91px;height:1px;background:#111"></div>
<div class="t " style="left:1127px;top:886px;font-size:11px;letter-spacing:-0.366px;">WheelBasedVehicleSpeed</div>
<div class="t " style="left:1273px;top:886px;font-size:11px;letter-spacing:-0.113px;">71,0 km/h</div>
<div class="a" style="left:1358px;top:888px;width:24px;height:10px;background:#4444e0"></div>
<div class="a" style="left:1357px;top:886px;width:1px;height:13px;background:#111"></div>
<div class="a" style="left:1357px;top:892px;width:91px;height:1px;background:#111"></div>
<div class="t " style="left:1127px;top:903px;font-size:11px;letter-spacing:-0.235px;">TachographVehicleSpeed</div>
<div class="t " style="left:1273px;top:903px;font-size:11px;letter-spacing:-0.113px;">71,0 km/h</div>
<div class="a" style="left:1358px;top:905px;width:24px;height:10px;background:#4444e0"></div>
<div class="a" style="left:1357px;top:903px;width:1px;height:13px;background:#111"></div>
<div class="a" style="left:1357px;top:909px;width:91px;height:1px;background:#111"></div>
<div class="a" style="left:1130px;top:920px;width:139px;height:13px;border:1px dotted #111"></div>
<div class="a" style="left:1126px;top:952px;width:73px;height:22px;background:#fff"></div>
<div class="t " style="left:1151px;top:956px;letter-spacing:-0.697px;">Watch 1</div>
<div class="t w" style="left:1205px;top:956px;letter-spacing:-0.597px;">Watch 2</div>
<div class="t w" style="left:1259px;top:956px;letter-spacing:-0.583px;">Watch 3</div>
<div class="t w" style="left:1313px;top:956px;letter-spacing:-0.611px;">Watch 4</div>
<div class="a" style="left:1251px;top:953px;width:1px;height:20px;background:#4b5b7c"></div>
<div class="a" style="left:1305px;top:953px;width:1px;height:20px;background:#4b5b7c"></div>
<div class="a" style="left:1359px;top:953px;width:1px;height:20px;background:#4b5b7c"></div>
<svg style="left:1129px;top:956px" width="18" height="12"><circle cx="4.500" cy="8" r="3.300" fill="none" stroke="#555" stroke-width="1.400"/><circle cx="13" cy="8" r="3.300" fill="none" stroke="#555" stroke-width="1.400"/><path d="M2 6l2.500-4.500M15.500 6l-2.500-4.500M7.800 7.500h2" stroke="#555" stroke-width="1.200" fill="none"/></svg>
<svg style="left:1441px;top:993px" width="13" height="13" fill="#dfe5ee"><rect x="9" y="1" width="2" height="2"/><rect x="5" y="5" width="2" height="2"/><rect x="9" y="5" width="2" height="2"/><rect x="1" y="9" width="2" height="2"/><rect x="5" y="9" width="2" height="2"/><rect x="9" y="9" width="2" height="2"/></svg>
<div class="a" style="left:1108px;top:158px;width:349px;height:20px;background:linear-gradient(#3f537f,#495d8b)"></div>
<div class="t w" style="left:1112px;top:161px;letter-spacing:-0.076px;">Project Manager</div>
<svg style="left:1442px;top:163px" width="11" height="11"><path d="M1 1l9 9m0-9l-9 9" stroke="#fff" stroke-width="1.700"/></svg>
<div class="a" style="left:1108px;top:178px;width:349px;height:34px;background:#bcc8dc"></div>
<div class="t " style="left:1141px;top:188px;letter-spacing:-0.172px;">New</div>
<div class="t " style="left:1200px;top:188px;letter-spacing:0.047px;">Add</div>
<div class="t " style="left:1257px;top:188px;color:#9aa4b5;letter-spacing:-0.451px;">Re<u>m</u>ove</div>
<svg style="left:1113.5px;top:181.5px" width="28" height="28" viewBox="0 0 24 24"><rect x="4.500" y="5.500" width="16" height="16" fill="#fff" stroke="#2f6db5" stroke-width="3"/><path d="M4 0.8999999999999999l1.08 2.52 2.52 1.08-2.52 1.08-1.08 2.52-1.08-2.52-2.52-1.08 2.52-1.08z" fill="#f3c27a"/><circle cx="4" cy="4.5" r="2.232" fill="#f3c27a"/></svg>
<svg style="left:1171.5px;top:181.5px" width="28" height="28" viewBox="0 0 24 24"><rect x="3.500" y="3.500" width="15" height="15" fill="#fff" stroke="#2f6db5" stroke-width="3"/><path d="M13.5 18h9.0M18 13.5v9.0" stroke="#fff" stroke-width="4.0"/><path d="M13.5 18h9.0M18 13.5v9.0" stroke="#3aaa78" stroke-width="2.4"/></svg>
<svg style="left:1232px;top:185px" width="20" height="20" viewBox="0 0 24 24"><path d="M3 3l18 18M21 3l-18 18" stroke="#a3acbd" stroke-width="5"/></svg>
<div class="a" style="left:1108px;top:212px;width:349px;height:286px;background:#fff"></div>
<div class="t " style="left:1151px;top:215px;">Project 'Truck Diagnostic'</div>
<svg style="left:1113px;top:219px" width="11" height="7"><path d="M1 1l4.500 4.500 4.500-4.500" stroke="#383838" stroke-width="1.900" fill="none"/></svg>
<div class="t " style="left:1170px;top:233px;letter-spacing:-0.011px;">Connections</div>
<svg style="left:1132px;top:237px" width="11" height="7"><path d="M1 1l4.500 4.500 4.500-4.500" stroke="#383838" stroke-width="1.900" fill="none"/></svg>
<div class="t " style="left:1189px;top:251px;letter-spacing:-0.170px;">FMS Connection</div>
<div class="t " style="left:1189px;top:269px;letter-spacing:-0.148px;">CAN FD Connection</div>
<div class="t " style="left:1189px;top:287px;letter-spacing:-0.106px;">PCAN-Gateway Connection</div>
<div class="t " style="left:1170px;top:305px;letter-spacing:-0.340px;">Message Filters</div>
<svg style="left:1132px;top:309px" width="11" height="7"><path d="M1 1l4.500 4.500 4.500-4.500" stroke="#383838" stroke-width="1.900" fill="none"/></svg>
<div class="t " style="left:1189px;top:323px;letter-spacing:-0.599px;">FMS Stack</div>
<div class="t " style="left:1189px;top:341px;letter-spacing:-0.132px;">Incoming Gateway Data</div>
<div class="t " style="left:1170px;top:359px;letter-spacing:-0.207px;">Macros</div>
<div class="t " style="left:1170px;top:377px;letter-spacing:-0.117px;">Active Symbols</div>
<svg style="left:1132px;top:381px" width="11" height="7"><path d="M1 1l4.500 4.500 4.500-4.500" stroke="#383838" stroke-width="1.900" fill="none"/></svg>
<div class="t " style="left:1189px;top:395px;letter-spacing:-0.430px;">J1939 Default Database</div>
<svg style="left:1155px;top:397px" width="7" height="11"><path d="M1 1l4 4.500-4 4.500" stroke="#a0a0a0" stroke-width="1.400" fill="none"/></svg>
<div class="t " style="left:1170px;top:413px;letter-spacing:-0.394px;">Signals</div>
<svg style="left:1132px;top:417px" width="11" height="7"><path d="M1 1l4.500 4.500 4.500-4.500" stroke="#383838" stroke-width="1.900" fill="none"/></svg>
<div class="t " style="left:1189px;top:431px;letter-spacing:-0.241px;">2WheelSteerActuatorState</div>
<div class="t " style="left:1189px;top:449px;letter-spacing:-0.241px;">4WheelSteerActuatorState</div>
<div class="t " style="left:1189px;top:467px;letter-spacing:-0.069px;">AboveNominalLevelFrontAxle</div>
<div class="t " style="left:1189px;top:485px;letter-spacing:-0.172px;">AboveNominalLevelRearAxle</div>
<svg style="left:1108px;top:212px" width="120" height="286" viewBox="1108 212 120 286" stroke="#9a9a9a" stroke-width="1" stroke-dasharray="1 1" fill="none"><path d="M1137.500 249V420M1156.500 249V294M1156.500 321V348M1156.500 429V498"/><path d="M1157 258.5h10"/><path d="M1157 276.5h10"/><path d="M1157 294.5h10"/><path d="M1157 330.5h10"/><path d="M1157 348.5h10"/><path d="M1138 366.5h9"/><path d="M1157 438.5h10"/><path d="M1157 456.5h10"/><path d="M1157 474.5h10"/><path d="M1157 492.5h10"/></svg>
<svg style="left:1130px;top:213px" width="18" height="18" viewBox="0 0 24 24"><rect x="3.500" y="1.500" width="17" height="19" fill="#fff" stroke="#555" stroke-width="1.200"/><rect x="3" y="1" width="18" height="4" fill="#3b6fb5"/><path d="M6 8.500h8M6 11.500h6M6 14.500h4" stroke="#555" stroke-width="1.200"/><g transform="translate(10 10) scale(1.0)"><rect x="8" y="0" width="6" height="6" fill="#9db7dc"/><rect x="0" y="8" width="6" height="6" fill="#9db7dc"/><path d="M0 0h6.500c3 0 3.500 8 7.500 8v6h-3c-4 0-4.500-8-7.500-8H0z" fill="#1f4e8c"/></g></svg>
<svg style="left:1148px;top:231px" width="18" height="18" viewBox="0 0 24 24"><path d="M1 5h8l2 2h8v4H1z" fill="#7a7a7a"/><path d="M1 8h22v13H1z" fill="#f0b050"/><g transform="translate(7 9) scale(0.8)"><g fill="none" stroke="#7a5a20" stroke-width="2.700" stroke-linecap="round"><path d="M10.500 6.500l2.500-2.500a3.700 3.700 0 0 1 5.300 5.300l-3.600 3.600a3.700 3.700 0 0 1-5.300 0"/><path d="M12.500 16l-2.500 2.500a3.700 3.700 0 0 1-5.300-5.300l3.600-3.600a3.700 3.700 0 0 1 5.300 0"/></g></g></svg>
<svg style="left:1167px;top:249px" width="18" height="18" viewBox="0 0 24 24"><g fill="none" stroke="#2a66a8" stroke-width="2.700" stroke-linecap="round"><path d="M10.500 6.500l2.500-2.500a3.700 3.700 0 0 1 5.300 5.300l-3.600 3.600a3.700 3.700 0 0 1-5.300 0"/><path d="M12.500 16l-2.500 2.500a3.700 3.700 0 0 1-5.300-5.300l3.600-3.600a3.700 3.700 0 0 1 5.300 0"/></g></svg>
<svg style="left:1167px;top:267px" width="18" height="18" viewBox="0 0 24 24"><g fill="none" stroke="#2a66a8" stroke-width="2.700" stroke-linecap="round"><path d="M10.500 6.500l2.500-2.500a3.700 3.700 0 0 1 5.300 5.300l-3.600 3.600a3.700 3.700 0 0 1-5.300 0"/><path d="M12.500 16l-2.500 2.500a3.700 3.700 0 0 1-5.300-5.300l3.600-3.600a3.700 3.700 0 0 1 5.300 0"/></g><circle cx="17" cy="17" r="5.500" fill="#fff" stroke="#d9432c" stroke-width="2"/><path d="M13.500 20.500l7-7" stroke="#d9432c" stroke-width="2"/></svg>
<svg style="left:1167px;top:285px" width="18" height="18" viewBox="0 0 24 24"><g fill="none" stroke="#2a66a8" stroke-width="2.700" stroke-linecap="round"><path d="M10.500 6.500l2.500-2.500a3.700 3.700 0 0 1 5.300 5.300l-3.600 3.600a3.700 3.700 0 0 1-5.300 0"/><path d="M12.500 16l-2.500 2.500a3.700 3.700 0 0 1-5.300-5.300l3.600-3.600a3.700 3.700 0 0 1 5.300 0"/></g></svg>
<svg style="left:1148px;top:303px" width="18" height="18" viewBox="0 0 24 24"><path d="M1 5h8l2 2h8v4H1z" fill="#7a7a7a"/><path d="M1 8h22v13H1z" fill="#f0b050"/><path d="M7 10h11l-4 5v5l-3-1v-4z" fill="#6a6a6a"/></svg>
<svg style="left:1167px;top:321px" width="18" height="18" viewBox="0 0 24 24"><path d="M2 2h20l-8 9v11l-4-2v-9z" fill="#7a7a7a"/></svg>
<svg style="left:1167px;top:339px" width="18" height="18" viewBox="0 0 24 24"><path d="M2 2h20l-8 9v11l-4-2v-9z" fill="#7a7a7a"/></svg>
<svg style="left:1148px;top:357px" width="18" height="18" viewBox="0 0 24 24"><path d="M7 2h14.500c1.500 0 2 1.200 1.500 2.500-0.500 1.400-1.700 1.700-3.200 1.700l0.700 11.300c0 2.500-1.200 4.500-3.500 4.500H2.500c-1.500 0-2-1.200-1.500-2.500 0.500-1.400 1.700-1.700 3.200-1.700L3.500 6.500C3.300 4 4.800 2 7 2z" fill="#f2c067"/><path d="M7.500 6h9M7.500 9h9.500M8 12h9.500M8 15h9.500M8.500 18h9" stroke="#fff6e0" stroke-width="1.100"/></svg>
<svg style="left:1148px;top:375px" width="18" height="18" viewBox="0 0 24 24"><path d="M1 5h8l2 2h8v4H1z" fill="#7a7a7a"/><path d="M1 8h22v13H1z" fill="#f0b050"/><path d="M5 12h14M5 16h9" stroke="#b03a2e" stroke-width="1.800"/><rect x="15" y="10" width="3" height="3" fill="#444"/></svg>
<svg style="left:1167px;top:393px" width="18" height="18" viewBox="0 0 24 24"><path d="M4 1h12l6 6v16h-18z" fill="#fff" stroke="#555" stroke-width="1"/><path d="M16 1v6h6" fill="none" stroke="#555" stroke-width="1"/><rect x="1" y="10" width="21" height="11" fill="#fff" stroke="#2f6db5" stroke-width="1.300"/><text x="11.500" y="19" text-anchor="middle" font-size="9" font-weight="bold" fill="#2f6db5" font-family="Liberation Sans, sans-serif" textLength="18" lengthAdjust="spacingAndGlyphs">CAN</text></svg>
<svg style="left:1148px;top:411px" width="18" height="18" viewBox="0 0 24 24"><path d="M2 15c3-12 7-12 10-3s7 9 10-3" stroke="#e8a33d" stroke-width="3.600" fill="none"/></svg>
<svg style="left:1167px;top:429px" width="18" height="18" viewBox="0 0 24 24"><path d="M2 15c3-12 7-12 10-3s7 9 10-3" stroke="#e8a33d" stroke-width="3.600" fill="none"/></svg>
<svg style="left:1167px;top:447px" width="18" height="18" viewBox="0 0 24 24"><path d="M2 15c3-12 7-12 10-3s7 9 10-3" stroke="#e8a33d" stroke-width="3.600" fill="none"/></svg>
<svg style="left:1167px;top:465px" width="18" height="18" viewBox="0 0 24 24"><path d="M2 15c3-12 7-12 10-3s7 9 10-3" stroke="#e8a33d" stroke-width="3.600" fill="none"/></svg>
<svg style="left:1167px;top:483px" width="18" height="18" viewBox="0 0 24 24"><path d="M2 15c3-12 7-12 10-3s7 9 10-3" stroke="#e8a33d" stroke-width="3.600" fill="none"/></svg>
<div class="a" style="left:1439px;top:212px;width:17px;height:286px;background:#f0f0f0"></div>
<svg style="left:1443px;top:218px" width="10" height="7"><path d="M1 5.500l4-4 4 4" stroke="#444" stroke-width="1.600" fill="none"/></svg>
<svg style="left:1443px;top:486px" width="10" height="7"><path d="M1 1l4 4 4-4" stroke="#444" stroke-width="1.600" fill="none"/></svg>
<div class="a" style="left:1440px;top:230px;width:15px;height:16px;background:#c9c9c9"></div>
<div class="a" style="left:1198px;top:498px;width:97px;height:22px;background:#fff"></div>
<div class="t w" style="left:1132px;top:502px;letter-spacing:-0.572px;">Project Files</div>
<div class="t " style="left:1222px;top:502px;letter-spacing:-0.464px;">Project Items</div>
<svg style="left:1111px;top:501px" width="16" height="16" viewBox="0 0 24 24"><path d="M1 5h8l2 2h8v4H1z" fill="#7a7a7a"/><path d="M1 8h22v13H1z" fill="#f0b050"/><rect x="0" y="3" width="14" height="10" fill="#3b6fb5"/><rect x="1" y="6" width="12" height="6" fill="#fff"/></svg>
<svg style="left:1203px;top:501px" width="16" height="16" viewBox="0 0 24 24"><path d="M2 1h12l5 5v17h-17z" fill="#fff" stroke="#555" stroke-width="1"/><path d="M14 1v5h5" fill="none" stroke="#555" stroke-width="1"/><path d="M6 7h3M6 11h8M6 15h8" stroke="#2f6db5" stroke-width="1.500"/><path d="M12 12l9 9m0-9l-9 9" stroke="#e8a33d" stroke-width="2"/></svg>
<div class="a" style="left:1108px;top:527px;width:349px;height:20px;background:linear-gradient(#3f537f,#495d8b)"></div>
<div class="t w" style="left:1112px;top:530px;letter-spacing:-0.260px;">Properties</div>
<svg style="left:1442px;top:532px" width="11" height="11"><path d="M1 1l9 9m0-9l-9 9" stroke="#fff" stroke-width="1.700"/></svg>
<div class="a" style="left:1108px;top:547px;width:349px;height:60px;background:#bcc8dc"></div>
<div class="a" style="left:1110px;top:550px;width:345px;height:21px;background:#fff;border:1px solid #8c8c8c"></div>
<div class="t " style="left:1114px;top:553px;letter-spacing:-0.277px;"><b>ReceiveMessage</b></div>
<div class="t " style="left:1211px;top:553px;letter-spacing:-0.363px;">ReceiveMessage Properties</div>
<svg style="left:1439px;top:558px" width="11" height="6"><path d="M0 0h10l-5 5.500z" fill="#111"/></svg>
<div class="a" style="left:1110px;top:575px;width:30px;height:30px;background:#fdf0c4;border:1px solid #ecd28f"></div>
<svg style="left:1113px;top:578px" width="60" height="26"><g fill="#fff" stroke="#222" stroke-width="1"><rect x="0.500" y="1.500" width="8" height="8"/><rect x="0.500" y="13.500" width="8" height="8"/></g><path d="M2.500 5.500h4M4.500 3.500v4M2.500 17.500h4M4.500 15.500v4" stroke="#222"/><path d="M11 4.500h10M11 7.500h10M11 10.500h10M11 16.500h10M11 19.500h10" stroke="#3aaa78" stroke-width="1.200"/><path d="M11 2h7M11 14h7" stroke="#555" stroke-width="1.200"/><text x="37" y="11" text-anchor="middle" font-size="13" font-weight="bold" fill="#2f6db5" font-family="Liberation Sans, sans-serif">A</text><text x="37" y="24" text-anchor="middle" font-size="13" font-weight="bold" fill="#c0392b" font-family="Liberation Sans, sans-serif">Z</text><path d="M50 2v19M44.500 15l5.500 6.500 5.500-6.500" stroke="#444" stroke-width="2.200" fill="none"/></svg>
<div class="a" style="left:1108px;top:607px;width:349px;height:230px;background:#fff;border-bottom:1px solid #999"></div>
<div class="a" style="left:1108px;top:607px;width:349px;height:21px;background:#f0f0f0"></div>
<div class="a" style="left:1108px;top:747px;width:349px;height:21px;background:#f0f0f0"></div>
<div class="a" style="left:1108px;top:607px;width:15px;height:181px;background:#f0f0f0"></div>
<svg style="left:1112px;top:613px" width="10" height="10"><rect x="0.500" y="0.500" width="8" height="8" fill="#fff" stroke="#8a8a8a"/><path d="M2.500 4.500h4" stroke="#333"/></svg>
<svg style="left:1112px;top:753px" width="10" height="10"><rect x="0.500" y="0.500" width="8" height="8" fill="#fff" stroke="#8a8a8a"/><path d="M2.500 4.500h4" stroke="#333"/></svg>
<div class="t " style="left:1126px;top:611px;color:#6d6d6d;letter-spacing:-0.381px;">CAN</div>
<div class="a" style="left:1124px;top:609px;width:29px;height:17px;border:1px dotted #333"></div>
<div class="t " style="left:1126px;top:751px;color:#6d6d6d;letter-spacing:-0.168px;">Misc</div>
<div class="t " style="left:1139px;top:631px;letter-spacing:-0.157px;">CAN-ID</div>
<div class="t " style="left:1290px;top:631px;color:#6d6d6d;letter-spacing:-0.642px;">418382848</div>
<div class="a" style="left:1123px;top:647px;width:334px;height:1px;background:#efefef"></div>
<div class="t " style="left:1139px;top:651px;letter-spacing:-0.260px;">CAN-ID (hex)</div>
<div class="t " style="left:1290px;top:651px;color:#6d6d6d;letter-spacing:-0.731px;">18F00400</div>
<div class="a" style="left:1123px;top:667px;width:334px;height:1px;background:#efefef"></div>
<div class="t " style="left:1139px;top:672px;letter-spacing:-0.190px;">Data Length</div>
<div class="t " style="left:1290px;top:672px;color:#6d6d6d">8</div>
<div class="a" style="left:1123px;top:688px;width:334px;height:1px;background:#efefef"></div>
<div class="t " style="left:1139px;top:692px;letter-spacing:-0.872px;">DLC</div>
<div class="t " style="left:1290px;top:692px;color:#6d6d6d">8</div>
<div class="a" style="left:1123px;top:708px;width:334px;height:1px;background:#efefef"></div>
<div class="t " style="left:1139px;top:712px;letter-spacing:-0.495px;">IsExtended</div>
<div class="t " style="left:1290px;top:712px;color:#6d6d6d;letter-spacing:-0.793px;">Yes</div>
<div class="a" style="left:1123px;top:728px;width:334px;height:1px;background:#efefef"></div>
<div class="t " style="left:1139px;top:732px;letter-spacing:-0.900px;">IsRTR</div>
<div class="t " style="left:1290px;top:732px;color:#6d6d6d;letter-spacing:0.128px;">No</div>
<div class="a" style="left:1123px;top:748px;width:334px;height:1px;background:#efefef"></div>
<div class="t " style="left:1139px;top:772px;letter-spacing:-0.829px;">Bus</div>
<div class="t " style="left:1290px;top:772px;color:#6d6d6d">1</div>
<div class="a" style="left:1123px;top:788px;width:334px;height:1px;background:#efefef"></div>
<div class="a" style="left:1287px;top:628px;width:1px;height:119px;background:#efefef"></div>
<div class="a" style="left:1287px;top:768px;width:1px;height:20px;background:#efefef"></div>
<div class="a" style="left:1108px;top:838px;width:349px;height:3px;background:#e9edf3"></div>
<div class="a" style="left:0px;top:31px;width:1px;height:976px;background:#3d3f44"></div>
<div class="a" style="left:1456px;top:31px;width:1px;height:976px;background:#3d3f44"></div>
<svg style="left:4px;top:36px" width="4" height="12" fill="#93a1ba"><rect x="1" y="0" width="2" height="2"/><rect x="1" y="4" width="2" height="2"/><rect x="1" y="8" width="2" height="2"/></svg>
</body></html>
